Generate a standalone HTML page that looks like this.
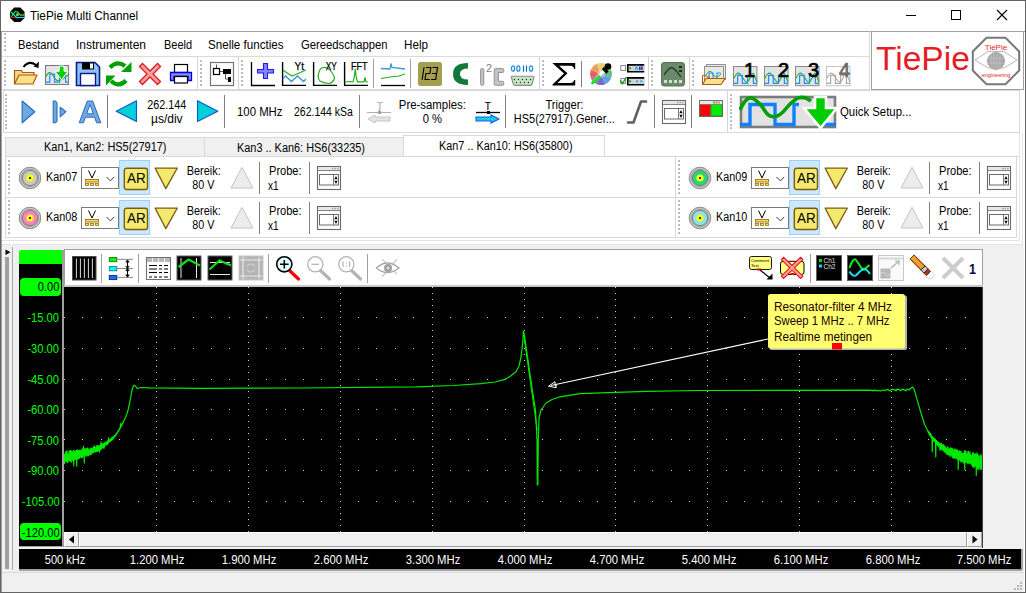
<!DOCTYPE html>
<html><head><meta charset="utf-8"><style>
html,body{margin:0;padding:0;width:1026px;height:593px;overflow:hidden;background:#fff}
body{position:relative;font-family:"Liberation Sans",sans-serif}
body>div,body>svg{position:absolute}
.t{white-space:nowrap;line-height:1;}
</style></head><body>
<div style="left:0px;top:0px;width:1026px;height:593px;background:#fff;border:1px solid #646464;box-sizing:border-box"></div>
<svg style="left:10px;top:7px;" width="15" height="16" viewBox="0 0 15 16"><polygon points="4.2,0.6 10.4,0.6 14.5,4.7 14.5,10.9 10.4,15 4.2,15 0.1,10.9 0.1,4.7" fill="#000"/><path d="M0.3,10.4 L6,10.4" stroke="#f00" stroke-width="1.1"/><path d="M10,7.2 L14.2,7.2" stroke="#f00" stroke-width="1"/><path d="M1.4,9.7 L5.2,4.4 L7.7,4.9 L10.2,8.2 L14.2,8.1" stroke="#0f0" stroke-width="1.1" fill="none"/><path d="M0.9,4.9 L6.7,10.7 L14.2,10.3" stroke="#0ff" stroke-width="1.1" fill="none"/><circle cx="7.4" cy="7.7" r="1.6" fill="#a0a0a0"/></svg>
<div style="left:906px;top:15px;width:10px;height:1px;background:#000"></div>
<div style="left:951px;top:10px;width:10px;height:10px;border:1px solid #000;box-sizing:border-box"></div>
<svg style="left:996px;top:9px;" width="12" height="12" viewBox="0 0 12 12"><path d="M1 1L11 11M11 1L1 11" stroke="#000" stroke-width="1.1"/></svg>
<div style="left:1px;top:31px;width:1024px;height:1px;background:#a0a0a0"></div>
<div style="left:1px;top:32px;width:1px;height:560px;background:#a0a0a0"></div>
<div style="left:2px;top:56px;width:867px;height:1px;background:#dadada"></div>
<div style="left:4px;top:33px;width:2px;height:2px;background:#c4c4c4"></div>
<div style="left:5px;top:34px;width:1px;height:1px;background:#a8a8a8"></div>
<div style="left:4px;top:37px;width:2px;height:2px;background:#c4c4c4"></div>
<div style="left:5px;top:38px;width:1px;height:1px;background:#a8a8a8"></div>
<div style="left:4px;top:41px;width:2px;height:2px;background:#c4c4c4"></div>
<div style="left:5px;top:42px;width:1px;height:1px;background:#a8a8a8"></div>
<div style="left:4px;top:45px;width:2px;height:2px;background:#c4c4c4"></div>
<div style="left:5px;top:46px;width:1px;height:1px;background:#a8a8a8"></div>
<div style="left:4px;top:49px;width:2px;height:2px;background:#c4c4c4"></div>
<div style="left:5px;top:50px;width:1px;height:1px;background:#a8a8a8"></div>
<div style="left:2px;top:89px;width:867px;height:1px;background:#dadada"></div>
<div style="left:869px;top:31px;width:1px;height:59px;background:#dadada"></div>
<div style="left:4px;top:60px;width:2px;height:2px;background:#c4c4c4"></div>
<div style="left:5px;top:61px;width:1px;height:1px;background:#a8a8a8"></div>
<div style="left:4px;top:64px;width:2px;height:2px;background:#c4c4c4"></div>
<div style="left:5px;top:65px;width:1px;height:1px;background:#a8a8a8"></div>
<div style="left:4px;top:68px;width:2px;height:2px;background:#c4c4c4"></div>
<div style="left:5px;top:69px;width:1px;height:1px;background:#a8a8a8"></div>
<div style="left:4px;top:72px;width:2px;height:2px;background:#c4c4c4"></div>
<div style="left:5px;top:73px;width:1px;height:1px;background:#a8a8a8"></div>
<div style="left:4px;top:76px;width:2px;height:2px;background:#c4c4c4"></div>
<div style="left:5px;top:77px;width:1px;height:1px;background:#a8a8a8"></div>
<div style="left:4px;top:80px;width:2px;height:2px;background:#c4c4c4"></div>
<div style="left:5px;top:81px;width:1px;height:1px;background:#a8a8a8"></div>
<div style="left:4px;top:84px;width:2px;height:2px;background:#c4c4c4"></div>
<div style="left:5px;top:85px;width:1px;height:1px;background:#a8a8a8"></div>
<div style="left:197px;top:57px;width:1px;height:32px;background:#d4d4d4"></div>
<div style="left:200px;top:60px;width:2px;height:2px;background:#c4c4c4"></div>
<div style="left:201px;top:61px;width:1px;height:1px;background:#a8a8a8"></div>
<div style="left:200px;top:64px;width:2px;height:2px;background:#c4c4c4"></div>
<div style="left:201px;top:65px;width:1px;height:1px;background:#a8a8a8"></div>
<div style="left:200px;top:68px;width:2px;height:2px;background:#c4c4c4"></div>
<div style="left:201px;top:69px;width:1px;height:1px;background:#a8a8a8"></div>
<div style="left:200px;top:72px;width:2px;height:2px;background:#c4c4c4"></div>
<div style="left:201px;top:73px;width:1px;height:1px;background:#a8a8a8"></div>
<div style="left:200px;top:76px;width:2px;height:2px;background:#c4c4c4"></div>
<div style="left:201px;top:77px;width:1px;height:1px;background:#a8a8a8"></div>
<div style="left:200px;top:80px;width:2px;height:2px;background:#c4c4c4"></div>
<div style="left:201px;top:81px;width:1px;height:1px;background:#a8a8a8"></div>
<div style="left:200px;top:84px;width:2px;height:2px;background:#c4c4c4"></div>
<div style="left:201px;top:85px;width:1px;height:1px;background:#a8a8a8"></div>
<div style="left:238px;top:57px;width:1px;height:32px;background:#d4d4d4"></div>
<div style="left:241px;top:60px;width:2px;height:2px;background:#c4c4c4"></div>
<div style="left:242px;top:61px;width:1px;height:1px;background:#a8a8a8"></div>
<div style="left:241px;top:64px;width:2px;height:2px;background:#c4c4c4"></div>
<div style="left:242px;top:65px;width:1px;height:1px;background:#a8a8a8"></div>
<div style="left:241px;top:68px;width:2px;height:2px;background:#c4c4c4"></div>
<div style="left:242px;top:69px;width:1px;height:1px;background:#a8a8a8"></div>
<div style="left:241px;top:72px;width:2px;height:2px;background:#c4c4c4"></div>
<div style="left:242px;top:73px;width:1px;height:1px;background:#a8a8a8"></div>
<div style="left:241px;top:76px;width:2px;height:2px;background:#c4c4c4"></div>
<div style="left:242px;top:77px;width:1px;height:1px;background:#a8a8a8"></div>
<div style="left:241px;top:80px;width:2px;height:2px;background:#c4c4c4"></div>
<div style="left:242px;top:81px;width:1px;height:1px;background:#a8a8a8"></div>
<div style="left:241px;top:84px;width:2px;height:2px;background:#c4c4c4"></div>
<div style="left:242px;top:85px;width:1px;height:1px;background:#a8a8a8"></div>
<div style="left:539px;top:57px;width:1px;height:32px;background:#d4d4d4"></div>
<div style="left:542px;top:60px;width:2px;height:2px;background:#c4c4c4"></div>
<div style="left:543px;top:61px;width:1px;height:1px;background:#a8a8a8"></div>
<div style="left:542px;top:64px;width:2px;height:2px;background:#c4c4c4"></div>
<div style="left:543px;top:65px;width:1px;height:1px;background:#a8a8a8"></div>
<div style="left:542px;top:68px;width:2px;height:2px;background:#c4c4c4"></div>
<div style="left:543px;top:69px;width:1px;height:1px;background:#a8a8a8"></div>
<div style="left:542px;top:72px;width:2px;height:2px;background:#c4c4c4"></div>
<div style="left:543px;top:73px;width:1px;height:1px;background:#a8a8a8"></div>
<div style="left:542px;top:76px;width:2px;height:2px;background:#c4c4c4"></div>
<div style="left:543px;top:77px;width:1px;height:1px;background:#a8a8a8"></div>
<div style="left:542px;top:80px;width:2px;height:2px;background:#c4c4c4"></div>
<div style="left:543px;top:81px;width:1px;height:1px;background:#a8a8a8"></div>
<div style="left:542px;top:84px;width:2px;height:2px;background:#c4c4c4"></div>
<div style="left:543px;top:85px;width:1px;height:1px;background:#a8a8a8"></div>
<div style="left:648px;top:57px;width:1px;height:32px;background:#d4d4d4"></div>
<div style="left:651px;top:60px;width:2px;height:2px;background:#c4c4c4"></div>
<div style="left:652px;top:61px;width:1px;height:1px;background:#a8a8a8"></div>
<div style="left:651px;top:64px;width:2px;height:2px;background:#c4c4c4"></div>
<div style="left:652px;top:65px;width:1px;height:1px;background:#a8a8a8"></div>
<div style="left:651px;top:68px;width:2px;height:2px;background:#c4c4c4"></div>
<div style="left:652px;top:69px;width:1px;height:1px;background:#a8a8a8"></div>
<div style="left:651px;top:72px;width:2px;height:2px;background:#c4c4c4"></div>
<div style="left:652px;top:73px;width:1px;height:1px;background:#a8a8a8"></div>
<div style="left:651px;top:76px;width:2px;height:2px;background:#c4c4c4"></div>
<div style="left:652px;top:77px;width:1px;height:1px;background:#a8a8a8"></div>
<div style="left:651px;top:80px;width:2px;height:2px;background:#c4c4c4"></div>
<div style="left:652px;top:81px;width:1px;height:1px;background:#a8a8a8"></div>
<div style="left:651px;top:84px;width:2px;height:2px;background:#c4c4c4"></div>
<div style="left:652px;top:85px;width:1px;height:1px;background:#a8a8a8"></div>
<div style="left:689px;top:57px;width:1px;height:32px;background:#d4d4d4"></div>
<div style="left:692px;top:60px;width:2px;height:2px;background:#c4c4c4"></div>
<div style="left:693px;top:61px;width:1px;height:1px;background:#a8a8a8"></div>
<div style="left:692px;top:64px;width:2px;height:2px;background:#c4c4c4"></div>
<div style="left:693px;top:65px;width:1px;height:1px;background:#a8a8a8"></div>
<div style="left:692px;top:68px;width:2px;height:2px;background:#c4c4c4"></div>
<div style="left:693px;top:69px;width:1px;height:1px;background:#a8a8a8"></div>
<div style="left:692px;top:72px;width:2px;height:2px;background:#c4c4c4"></div>
<div style="left:693px;top:73px;width:1px;height:1px;background:#a8a8a8"></div>
<div style="left:692px;top:76px;width:2px;height:2px;background:#c4c4c4"></div>
<div style="left:693px;top:77px;width:1px;height:1px;background:#a8a8a8"></div>
<div style="left:692px;top:80px;width:2px;height:2px;background:#c4c4c4"></div>
<div style="left:693px;top:81px;width:1px;height:1px;background:#a8a8a8"></div>
<div style="left:692px;top:84px;width:2px;height:2px;background:#c4c4c4"></div>
<div style="left:693px;top:85px;width:1px;height:1px;background:#a8a8a8"></div>
<div style="left:373px;top:59px;width:1px;height:29px;background:#a0a0a0"></div>
<div style="left:410px;top:59px;width:1px;height:29px;background:#a0a0a0"></div>
<div style="left:581px;top:61px;width:1px;height:26px;background:#808080"></div>
<svg style="left:12px;top:60px;" width="28" height="26" viewBox="0 0 28 26"><path d="M11.5,7 Q17,0 24,5" stroke="#000" stroke-width="2" fill="none"/><path d="M21.5,6.5 L27,1.5 L26.5,8 Z" fill="#000"/><path d="M2.5,24 L2.5,10.5 L9.5,10.5 L10.5,12.5 L22,12.5 L22,15" fill="#f5d890" stroke="#b05a0a" stroke-width="1.2"/><path d="M2.5,24 L7,15 L25,15 L21,24 Z" fill="#fbe08c" stroke="#b05a0a" stroke-width="1.2" stroke-linejoin="round"/></svg>
<svg style="left:44px;top:64px;" width="26" height="22" viewBox="0 0 26 22"><rect x="1.5" y="1.5" width="23" height="19" fill="#e6e6e6" stroke="#7c7c7c" stroke-width="1.1"/><path d="M2,12.5 Q5,6 8,10 Q11,15 13,16.5 Q17,17 21,13 L24,11" stroke="#20b020" stroke-width="1.1" fill="none"/><path d="M2,18.2 L5.8,18.2 L5.8,10.2 L10.5,10.2 L10.5,18.2 L15.7,18.2 L15.7,10.2 L21.6,10.2 L21.6,18.2 L24,18.2" stroke="#1e8cff" stroke-width="1.2" fill="none"/><path d="M15.2,2.1 L20,2.1 L20,7.3 L24,7.3 L17.6,15.8 L11,7.3 L15.2,7.3 Z" fill="#00d000" stroke="#fff" stroke-width="1"/></svg>
<svg style="left:75px;top:61px;" width="26" height="26" viewBox="0 0 26 26"><path d="M1.5,1.5 L20,1.5 L24.5,6 L24.5,24.5 L1.5,24.5 Z" fill="#8cc4f8" stroke="#0a1a8c" stroke-width="1.6"/><rect x="7" y="1.5" width="12" height="7" fill="#000"/><rect x="15" y="2.5" width="3" height="5" fill="#fff"/><rect x="5.5" y="12.5" width="15" height="12" fill="#fff" stroke="#0a1a8c" stroke-width="1.4"/></svg>
<svg style="left:105px;top:61px;" width="28" height="26" viewBox="0 0 28 26"><path d="M5,6.5 Q12,-1 20,5" stroke="#00a000" stroke-width="4.2" fill="none"/><path d="M16,11 L26.5,11 L26.5,1 Z" fill="#00a000"/><path d="M21,19.5 Q14,27 6,20" stroke="#00a000" stroke-width="4.2" fill="none"/><path d="M10.5,14.5 L1,14.5 L1,24.5 Z" fill="#00a000"/></svg>
<svg style="left:138px;top:62px;" width="24" height="24" viewBox="0 0 24 24"><path d="M1.5,4.5 L4.5,1.5 L12,9 L19.5,1.5 L22.5,4.5 L15,12 L22.5,19.5 L19.5,22.5 L12,15 L4.5,22.5 L1.5,19.5 L9,12 Z" fill="#f4a0a0" stroke="#dc1e1e" stroke-width="1.3" stroke-linejoin="miter"/></svg>
<svg style="left:169px;top:63px;" width="24" height="22" viewBox="0 0 24 22"><rect x="5.5" y="1.5" width="13" height="8" fill="#fff" stroke="#000" stroke-width="1.2"/><path d="M1.5,9.5 L22.5,9.5 L22.5,17.5 L19,17.5 L19,13.5 L5,13.5 L5,17.5 L1.5,17.5 Z" fill="#8888f4" stroke="#0000e0" stroke-width="1.3"/><rect x="5.5" y="13.5" width="13" height="6.5" fill="#fff" stroke="#000" stroke-width="1.2"/></svg>
<svg style="left:209px;top:61px;" width="26" height="26" viewBox="0 0 26 26"><rect x="1.5" y="1.5" width="23" height="23" fill="#fff" stroke="#767676" stroke-width="1.2"/><path d="M7.5,3.5 L7.5,7.5 M11,10.5 L14,10.5 M16.5,12.5 L16.5,18 L19,18" stroke="#555" stroke-width="1" fill="none"/><rect x="4.5" y="7.5" width="6" height="6" fill="#fff" stroke="#000" stroke-width="1.2"/><rect x="14" y="8" width="8" height="5" fill="#000"/><rect x="19" y="16" width="3" height="5" fill="#000"/></svg>
<svg style="left:250px;top:61px;" width="26" height="26" viewBox="0 0 26 26"><path d="M1.5,1 L1.5,24.5 L25,24.5" stroke="#000" stroke-width="1.3" fill="none"/><path d="M13.5,2.5 L17.5,2.5 L17.5,8.5 L23.5,8.5 L23.5,12 L17.5,12 L17.5,17.5 L13.5,17.5 L13.5,12 L7.5,12 L7.5,8.5 L13.5,8.5 Z" fill="#8484ff" stroke="#1e1ee6" stroke-width="1.1"/></svg>
<svg style="left:281px;top:61px;" width="26" height="26" viewBox="0 0 26 26"><path d="M1.6,1 L1.6,24.4 L25,24.4" stroke="#000" stroke-width="1.4" fill="none"/><path d="M2,9.3 L11,15 L17,12.5 L25,9" stroke="#20b020" stroke-width="1.2" fill="none"/><path d="M2,17.5 L4.5,15 L10.5,20.5 L16.5,15 L22.5,20.5 L25,18" stroke="#3c96dc" stroke-width="1.4" fill="none"/><text x="13.5" y="8.6" font-size="10.5" font-family="Liberation Sans" fill="#000" stroke="#000" stroke-width="0.25" textLength="9.5" lengthAdjust="spacingAndGlyphs">Yt</text></svg>
<svg style="left:312px;top:61px;" width="26" height="26" viewBox="0 0 26 26"><path d="M1.6,1 L1.6,24.4 L25,24.4" stroke="#000" stroke-width="1.4" fill="none"/><path d="M10,6.8 Q15,5.5 18,9 Q22,14 22.5,17 Q21.5,21 17.5,22.5 Q12,22.5 8,20 Q5.5,17.5 6.5,13 Q7.5,8 10,6.8 Z" stroke="#20b020" stroke-width="1.2" fill="none"/><text x="13.8" y="8.6" font-size="10.5" font-family="Liberation Sans" fill="#000" stroke="#000" stroke-width="0.25" textLength="11" lengthAdjust="spacingAndGlyphs">XY</text></svg>
<svg style="left:343px;top:61px;" width="26" height="26" viewBox="0 0 26 26"><path d="M1.6,1 L1.6,24.4 L25,24.4" stroke="#000" stroke-width="1.4" fill="none"/><path d="M2,21 L7,20.5 L10,20.8 L11.3,16 L12.3,7.8 L13.3,17 L14.5,20.8 L21,20.8 L22,16.5 L23,20.8 L25,21" stroke="#20b020" stroke-width="1.2" fill="none"/><text x="8" y="8.6" font-size="10.5" font-family="Liberation Sans" fill="#000" stroke="#000" stroke-width="0.25" textLength="16.5" lengthAdjust="spacingAndGlyphs">FFT</text></svg>
<svg style="left:380px;top:61px;" width="26" height="26" viewBox="0 0 26 26"><path d="M1,7.5 L10,8 L11,2.5 L12,6.5 L25,8" stroke="#3c96dc" stroke-width="1.3" fill="none"/><path d="M1,17.5 L10,16 L19,15 L25,13" stroke="#20b020" stroke-width="1.2" fill="none"/><path d="M1,24.5 L25,24.5" stroke="#000" stroke-width="1.3"/></svg>
<svg style="left:417px;top:61px;" width="26" height="26" viewBox="0 0 26 26"><rect x="1" y="1" width="24" height="24" rx="2.5" fill="#a59e4e"/><g stroke="#000" stroke-width="1.1" fill="none" stroke-linecap="round"><path d="M7,6.5 L5.2,18.5"/><path d="M9.5,6.5 L13.8,6.5 L12.9,12.5 L8.9,12.5 L8,18.5 L12.3,18.5"/><path d="M16,6.5 L20.5,6.5 L18.7,18.5 L14.5,18.5 M15.4,12.5 L19.6,12.5"/></g></svg>
<svg style="left:452px;top:61px;" width="18" height="26" viewBox="0 0 18 26"><path d="M16,2 L16,7.5 Q8,7.5 8,13 Q8,18.5 16,18.5 L16,24 Q1,24 1,13 Q1,2 16,2 Z" fill="#117a3a"/></svg>
<svg style="left:478px;top:62px;" width="28" height="26" viewBox="0 0 28 26"><rect x="2.6" y="6.5" width="3.2" height="16.8" rx="1.6" fill="#c4c4c4" stroke="#8a8a8a" stroke-width="0.9"/><text x="8" y="10" font-size="10" font-family="Liberation Sans" fill="#808080" textLength="6" lengthAdjust="spacingAndGlyphs">2</text><path d="M17.5,6.5 L24.5,6.5 Q25.8,6.5 25.8,8 L25.8,9.5 Q25.8,10.5 24.5,10.5 L20.4,10.5 L20.4,19.3 L24.5,19.3 Q25.8,19.3 25.8,20.5 L25.8,22 Q25.8,23.3 24.5,23.3 L17.5,23.3 Q16.2,23.3 16.2,22 L16.2,8 Q16.2,6.5 17.5,6.5 Z" fill="#c4c4c4" stroke="#8a8a8a" stroke-width="0.9"/></svg>
<svg style="left:509px;top:62px;" width="26" height="26" viewBox="0 0 26 26"><g fill="none" stroke="#2490e0" stroke-width="1.3"><ellipse cx="4" cy="6.5" rx="1.6" ry="2.7"/><ellipse cx="9.3" cy="6.5" rx="1.6" ry="2.7"/><ellipse cx="22" cy="6.5" rx="1.6" ry="2.7"/></g><path d="M14.5,3.5 V9.8 M17.5,3.5 V9.8" stroke="#1070c8" stroke-width="1.2"/><path d="M3.2,14.3 L24,14.3 Q25.2,14.3 24.9,15.5 L23,22.2 Q22.7,23.4 21.5,23.4 L5.8,23.4 Q4.6,23.4 4.3,22.2 L2.4,15.5 Q2.1,14.3 3.2,14.3 Z" fill="#c4e4c4" stroke="#8c8c8c" stroke-width="1.1"/><g fill="#222"><circle cx="5.4" cy="17.5" r="0.65"/><circle cx="9.4" cy="17.5" r="0.65"/><circle cx="13.4" cy="17.5" r="0.65"/><circle cx="17.4" cy="17.5" r="0.65"/><circle cx="21.4" cy="17.5" r="0.65"/><circle cx="7.4" cy="20.5" r="0.65"/><circle cx="11.4" cy="20.5" r="0.65"/><circle cx="15.4" cy="20.5" r="0.65"/><circle cx="19.4" cy="20.5" r="0.65"/></g></svg>
<svg style="left:551px;top:62px;" width="26" height="26" viewBox="0 0 26 26"><path d="M1.3,1 L24.2,1 L24.2,7 L23.2,7 Q22.5,3.7 19,3.7 L8,3.7 L16.5,11.3 L6.5,20.9 L19.5,20.9 Q22.5,20.9 23.2,17.9 L24.2,17.9 L24.2,23.5 L1.5,23.5 L1.5,22.6 L13,11.6 Z" fill="#000"/></svg>
<svg style="left:589px;top:62px;" width="24" height="24" viewBox="0 0 24 24"><path d="M12,12 L22.16,7.79 A11,11 0 0 1 22.16,16.21 Z" fill="#5cc080"/><path d="M12,12 L22.16,16.21 A11,11 0 0 1 16.21,22.16 Z" fill="#60a0e0"/><path d="M12,12 L16.21,22.16 A11,11 0 0 1 7.79,22.16 Z" fill="#7070c8"/><path d="M12,12 L7.79,22.16 A11,11 0 0 1 1.84,16.21 Z" fill="#b060b8"/><path d="M12,12 L1.84,16.21 A11,11 0 0 1 1.84,7.79 Z" fill="#e86060"/><path d="M12,12 L1.84,7.79 A11,11 0 0 1 7.79,1.84 Z" fill="#e8a060"/><path d="M12,12 L7.79,1.84 A11,11 0 0 1 16.21,1.84 Z" fill="#e8d070"/><path d="M12,12 L16.21,1.84 A11,11 0 0 1 22.16,7.79 Z" fill="#a8d070"/><circle cx="12" cy="12" r="4" fill="#ffffff" opacity="0.3"/><path d="M5,19 L16,8" stroke="#fff" stroke-width="2.6"/><path d="M3.5,21 L10,14.5" stroke="#10ee10" stroke-width="2.8" stroke-linecap="round"/><path d="M14,6 L18.5,10.5" stroke="#000" stroke-width="3.2"/><circle cx="19" cy="4.5" r="3.3" fill="#000"/></svg>
<svg style="left:619px;top:62px;" width="27" height="24" viewBox="0 0 27 24"><rect x="1.8" y="3.5" width="4.8" height="5" fill="#fff" stroke="#8a8a8a" stroke-width="1"/><rect x="8.8" y="2.9" width="17" height="6.8" fill="#d4d4d4"/><path d="M25.2,2.9 L8.8,2.9 L8.8,9.7 L25.2,9.7" stroke="#000" stroke-width="1.6" fill="none"/><path d="M10.3,4.8 L12.6,6.3 L10.3,7.8 Z" fill="#10a010"/><path d="M16,8 L17.5,4.5 L19,8" stroke="#30b0e8" stroke-width="1.3" fill="none"/><rect x="20.2" y="4.5" width="1.3" height="3.6" fill="#0010c0"/><rect x="22.3" y="4.5" width="1.3" height="3.6" fill="#0010c0"/><rect x="1.8" y="16.5" width="4.8" height="5" fill="#fff" stroke="#8a8a8a" stroke-width="1"/><path d="M1.2,18.5 L3.5,21.5 L7.5,15" stroke="#10a010" stroke-width="1.4" fill="none"/><rect x="8.8" y="15.9" width="17" height="6.8" fill="#d4d4d4"/><path d="M25.2,15.9 L8.8,15.9 L8.8,22.7 L25.2,22.7" stroke="#000" stroke-width="1.6" fill="none"/><path d="M10.3,17.8 L12.6,19.3 L10.3,20.8 Z" fill="#10a010"/><path d="M19,17.6 L16.5,19.3 L19,21 Z" fill="#30b0e8"/><path d="M21.5,17.6 L24,19.3 L21.5,21 Z" fill="#30b0e8"/></svg>
<svg style="left:660px;top:61px;" width="26" height="26" viewBox="0 0 26 26"><rect x="1.5" y="1.5" width="23" height="23.5" rx="2.5" fill="#6b8a6b" stroke="#567556" stroke-width="1"/><path d="M4,14 Q10,5 13,7 Q17,10 21,16" stroke="#1e2a1e" stroke-width="1.2" fill="none"/><rect x="19" y="5" width="3" height="2" fill="#1e2a1e"/><rect x="19" y="9" width="3" height="2" fill="#1e2a1e"/><g fill="#cfe0cf"><rect x="4" y="19" width="3" height="3"/><rect x="9" y="19" width="3" height="3"/><rect x="14" y="19" width="3" height="3"/><rect x="19" y="19" width="3" height="3"/></g></svg>
<svg style="left:701px;top:63px;" width="26" height="24" viewBox="0 0 26 24"><rect x="5.5" y="1.5" width="19" height="15" fill="#e8e8e8" stroke="#909090" stroke-width="1"/><rect x="3.5" y="3.5" width="19" height="15" fill="#e8e8e8" stroke="#909090" stroke-width="1"/><path d="M5,12 Q9,5 12,11 T20,11" stroke="#20b020" stroke-width="1" fill="none"/><path d="M8,17 L8,10 L12,10 L12,17 L16,17 L16,10 L20,10" stroke="#1e90ff" stroke-width="1.1" fill="none"/><path d="M1.5,21.5 L1.5,12.5 L5,12.5 L6,14 L9,14" fill="none" stroke="#b05a0a" stroke-width="1"/><path d="M1.5,21.5 L5,15.5 L24,15.5 L20,21.5 Z" fill="#fbe08c" stroke="#b05a0a" stroke-width="1.1" stroke-linejoin="round"/></svg>
<svg style="left:733px;top:61px;" width="26" height="26" viewBox="0 0 26 26"><rect x="0.5" y="5.5" width="23.5" height="19.2" fill="#e4e4e4" stroke="#8a8a8a" stroke-width="1"/><path d="M1,17.3 Q4,10 7,13 Q10,17 12,20 Q14.5,23 17,17 Q19.5,10 21,13.5 Q22.5,17 24,21" stroke="#20b020" stroke-width="1.1" fill="none"/><path d="M1,22.3 L4.6,22.3 L4.6,14.3 L9.3,14.3 L9.3,22.3 L14.5,22.3 L14.5,14.3 L20.4,14.3 L20.4,22.3 L24,22.3" stroke="#1e90ff" stroke-width="1.2" fill="none"/></svg>
<svg style="left:738px;top:58px" width="18" height="20" viewBox="0 0 18 20"><text x="17" y="18.7" text-anchor="end" font-size="20" font-family="Liberation Sans" fill="#000" stroke="#000" stroke-width="0.7">1</text></svg>
<svg style="left:764px;top:61px;" width="26" height="26" viewBox="0 0 26 26"><rect x="0.5" y="5.5" width="23.5" height="19.2" fill="#e4e4e4" stroke="#8a8a8a" stroke-width="1"/><path d="M1,17.3 Q4,10 7,13 Q10,17 12,20 Q14.5,23 17,17 Q19.5,10 21,13.5 Q22.5,17 24,21" stroke="#20b020" stroke-width="1.1" fill="none"/><path d="M1,22.3 L4.6,22.3 L4.6,14.3 L9.3,14.3 L9.3,22.3 L14.5,22.3 L14.5,14.3 L20.4,14.3 L20.4,22.3 L24,22.3" stroke="#1e90ff" stroke-width="1.2" fill="none"/></svg>
<svg style="left:771.5px;top:58px" width="18" height="20" viewBox="0 0 18 20"><text x="17" y="18.7" text-anchor="end" font-size="20" font-family="Liberation Sans" fill="#000" stroke="#000" stroke-width="0.7">2</text></svg>
<svg style="left:795px;top:61px;" width="26" height="26" viewBox="0 0 26 26"><rect x="0.5" y="5.5" width="23.5" height="19.2" fill="#e4e4e4" stroke="#8a8a8a" stroke-width="1"/><path d="M1,17.3 Q4,10 7,13 Q10,17 12,20 Q14.5,23 17,17 Q19.5,10 21,13.5 Q22.5,17 24,21" stroke="#20b020" stroke-width="1.1" fill="none"/><path d="M1,22.3 L4.6,22.3 L4.6,14.3 L9.3,14.3 L9.3,22.3 L14.5,22.3 L14.5,14.3 L20.4,14.3 L20.4,22.3 L24,22.3" stroke="#1e90ff" stroke-width="1.2" fill="none"/></svg>
<svg style="left:801.8px;top:58px" width="18" height="20" viewBox="0 0 18 20"><text x="17" y="18.7" text-anchor="end" font-size="20" font-family="Liberation Sans" fill="#000" stroke="#000" stroke-width="0.7">3</text></svg>
<svg style="left:826px;top:61px;" width="26" height="26" viewBox="0 0 26 26"><rect x="0.5" y="5.5" width="23.5" height="19.2" fill="#ffffff" stroke="#c4c4c4" stroke-width="1"/><path d="M1,17.3 Q4,10 7,13 Q10,17 12,20 Q14.5,23 17,17 Q19.5,10 21,13.5 Q22.5,17 24,21" stroke="#a8a8a8" stroke-width="1.1" fill="none"/><path d="M1,22.3 L4.6,22.3 L4.6,14.3 L9.3,14.3 L9.3,22.3 L14.5,22.3 L14.5,14.3 L20.4,14.3 L20.4,22.3 L24,22.3" stroke="#a8a8a8" stroke-width="1.2" fill="none"/></svg>
<svg style="left:832.8px;top:58px" width="18" height="20" viewBox="0 0 18 20"><text x="17" y="18.7" text-anchor="end" font-size="20" font-family="Liberation Sans" fill="#6a6a6a" stroke="#6a6a6a" stroke-width="0.7">4</text></svg>
<div style="left:871px;top:31px;width:153px;height:59px;background:#fff;border:1px solid #a0a0a0;box-sizing:border-box"></div>
<svg style="left:971px;top:36px;" width="50" height="50" viewBox="0 0 50 50"><polygon points="15.5,1.8 34.5,1.8 48.2,15.5 48.2,34.5 34.5,48.2 15.5,48.2 1.8,34.5 1.8,15.5" fill="#fff" stroke="#777" stroke-width="2"/><path d="M4,24 L17,15.5 L33,15.5 L46,24 L33,32 L17,32 Z" fill="none" stroke="#888" stroke-width="0.6"/><circle cx="25" cy="25" r="8.5" fill="#a8a8a8" stroke="#888" stroke-width="0.6"/><g stroke="#d0d0d0" stroke-width="0.5"><path d="M20,18 L20,32 M23,17 L23,33 M26,17 L26,33 M29,17 L29,33M17,22 L33,22 M17,27 L33,27"/></g><text x="25" y="14" font-size="8" font-family="Liberation Sans" fill="#e31e24" text-anchor="middle">TiePie</text><text x="25" y="41" font-size="5.5" font-family="Liberation Sans" fill="#e31e24" text-anchor="middle">engineering</text></svg>
<div style="left:3px;top:90px;width:1017px;height:43px;background:#fff;border:1px solid #dadada;box-sizing:border-box"></div>
<div style="left:5px;top:94px;width:2px;height:2px;background:#c4c4c4"></div>
<div style="left:6px;top:95px;width:1px;height:1px;background:#a8a8a8"></div>
<div style="left:5px;top:98px;width:2px;height:2px;background:#c4c4c4"></div>
<div style="left:6px;top:99px;width:1px;height:1px;background:#a8a8a8"></div>
<div style="left:5px;top:101px;width:2px;height:2px;background:#c4c4c4"></div>
<div style="left:6px;top:102px;width:1px;height:1px;background:#a8a8a8"></div>
<div style="left:5px;top:105px;width:2px;height:2px;background:#c4c4c4"></div>
<div style="left:6px;top:106px;width:1px;height:1px;background:#a8a8a8"></div>
<div style="left:5px;top:109px;width:2px;height:2px;background:#c4c4c4"></div>
<div style="left:6px;top:110px;width:1px;height:1px;background:#a8a8a8"></div>
<div style="left:5px;top:112px;width:2px;height:2px;background:#c4c4c4"></div>
<div style="left:6px;top:113px;width:1px;height:1px;background:#a8a8a8"></div>
<div style="left:5px;top:116px;width:2px;height:2px;background:#c4c4c4"></div>
<div style="left:6px;top:117px;width:1px;height:1px;background:#a8a8a8"></div>
<div style="left:5px;top:120px;width:2px;height:2px;background:#c4c4c4"></div>
<div style="left:6px;top:121px;width:1px;height:1px;background:#a8a8a8"></div>
<div style="left:5px;top:124px;width:2px;height:2px;background:#c4c4c4"></div>
<div style="left:6px;top:125px;width:1px;height:1px;background:#a8a8a8"></div>
<div style="left:5px;top:127px;width:2px;height:2px;background:#c4c4c4"></div>
<div style="left:6px;top:128px;width:1px;height:1px;background:#a8a8a8"></div>
<div style="left:107px;top:95px;width:1px;height:33px;background:#808080"></div>
<div style="left:224px;top:95px;width:1px;height:33px;background:#808080"></div>
<div style="left:359px;top:95px;width:1px;height:33px;background:#808080"></div>
<div style="left:505px;top:95px;width:1px;height:33px;background:#808080"></div>
<div style="left:654px;top:95px;width:1px;height:33px;background:#808080"></div>
<div style="left:691px;top:95px;width:1px;height:33px;background:#808080"></div>
<div style="left:727px;top:91px;width:1px;height:41px;background:#d4d4d4"></div>
<div style="left:730px;top:94px;width:2px;height:2px;background:#c4c4c4"></div>
<div style="left:731px;top:95px;width:1px;height:1px;background:#a8a8a8"></div>
<div style="left:730px;top:98px;width:2px;height:2px;background:#c4c4c4"></div>
<div style="left:731px;top:99px;width:1px;height:1px;background:#a8a8a8"></div>
<div style="left:730px;top:101px;width:2px;height:2px;background:#c4c4c4"></div>
<div style="left:731px;top:102px;width:1px;height:1px;background:#a8a8a8"></div>
<div style="left:730px;top:105px;width:2px;height:2px;background:#c4c4c4"></div>
<div style="left:731px;top:106px;width:1px;height:1px;background:#a8a8a8"></div>
<div style="left:730px;top:109px;width:2px;height:2px;background:#c4c4c4"></div>
<div style="left:731px;top:110px;width:1px;height:1px;background:#a8a8a8"></div>
<div style="left:730px;top:112px;width:2px;height:2px;background:#c4c4c4"></div>
<div style="left:731px;top:113px;width:1px;height:1px;background:#a8a8a8"></div>
<div style="left:730px;top:116px;width:2px;height:2px;background:#c4c4c4"></div>
<div style="left:731px;top:117px;width:1px;height:1px;background:#a8a8a8"></div>
<div style="left:730px;top:120px;width:2px;height:2px;background:#c4c4c4"></div>
<div style="left:731px;top:121px;width:1px;height:1px;background:#a8a8a8"></div>
<div style="left:730px;top:124px;width:2px;height:2px;background:#c4c4c4"></div>
<div style="left:731px;top:125px;width:1px;height:1px;background:#a8a8a8"></div>
<div style="left:730px;top:127px;width:2px;height:2px;background:#c4c4c4"></div>
<div style="left:731px;top:128px;width:1px;height:1px;background:#a8a8a8"></div>
<svg style="left:21px;top:100px;" width="16" height="24" viewBox="0 0 16 24"><path d="M1.2,1 L13.8,11.7 L1.2,22.8 Z" fill="#70a8e0" stroke="#2a6cc0" stroke-width="1.2" stroke-linejoin="round"/></svg>
<svg style="left:52px;top:100px;" width="16" height="24" viewBox="0 0 16 24"><path d="M1.2,1 L3.5,1 L5,3 L5,21 L3.5,22.8 L1.2,22.8 Z" fill="#70a8e0" stroke="#2a6cc0" stroke-width="1.1" stroke-linejoin="round"/><path d="M8.2,7.2 L14,11.7 L8.2,16.9 Z" fill="#70a8e0" stroke="#2a6cc0" stroke-width="1.1" stroke-linejoin="round"/></svg>
<svg style="left:78px;top:100px;" width="24" height="24" viewBox="0 0 24 24"><path d="M1.2,22.8 L9.3,1 L14.7,1 L22.8,22.8 L18.6,22.8 L16.6,17.2 L7.4,17.2 L5.4,22.8 Z M8.7,13.8 L15.3,13.8 L12,4.6 Z" fill="#70a8e0" stroke="#2a6cc0" stroke-width="1" fill-rule="evenodd" stroke-linejoin="round"/></svg>
<svg style="left:115px;top:100px;" width="23" height="23" viewBox="0 0 23 23"><path d="M21.5,0.8 L21.5,21.5 L1.2,11.2 Z" fill="#00d0d8" stroke="#1a50d0" stroke-width="1.1" stroke-linejoin="round"/></svg>
<svg style="left:196px;top:100px;" width="23" height="23" viewBox="0 0 23 23"><path d="M1.5,0.8 L1.5,21.5 L21.8,11.2 Z" fill="#00d0d8" stroke="#1a50d0" stroke-width="1.1" stroke-linejoin="round"/></svg>
<svg style="left:366px;top:100px;" width="26" height="24" viewBox="0 0 26 24"><text x="10.5" y="10" font-size="11" font-family="Liberation Sans" fill="#b0b0b0">T</text><path d="M1,12.5 L25,12.5 M13.5,9 L13.5,12.5" stroke="#b0b0b0" stroke-width="1.2"/><rect x="12" y="11" width="3" height="3" fill="#a0a0a0"/><path d="M24,17 L9,17 L9,15 L2,19 L9,23 L9,21 L24,21 Z" fill="#e4e4e4" stroke="#c4c4c4" stroke-width="1"/></svg>
<svg style="left:475px;top:100px;" width="26" height="24" viewBox="0 0 26 24"><text x="9.5" y="10" font-size="11" font-family="Liberation Sans" fill="#000">T</text><path d="M1,12.5 L25,12.5" stroke="#000" stroke-width="1.3"/><rect x="12" y="11" width="3" height="3" fill="#000"/><path d="M1,17 L16,17 L16,15 L24,19 L16,23 L16,21 L1,21 Z" fill="#20c8e8" stroke="#1060e0" stroke-width="1.1"/></svg>
<svg style="left:625px;top:99px;" width="24" height="26" viewBox="0 0 24 26"><path d="M3,23.5 L8.5,23.5 L16,2.5 L21,2.5" stroke="#606060" stroke-width="2.6" stroke-linecap="round" stroke-linejoin="round" fill="none"/></svg>
<svg style="left:661px;top:99px;" width="26" height="26" viewBox="0 0 26 26"><rect x="1.5" y="1.5" width="23" height="23" fill="#fff" stroke="#6a6a6a" stroke-width="1.1"/><rect x="2" y="2" width="22" height="3.5" fill="#e6e6e6"/><path d="M2,5.5 L24,5.5" stroke="#6a6a6a" stroke-width="0.8"/><g fill="#a0a0a0"><rect x="16" y="2.8" width="1.5" height="1.5"/><rect x="18.5" y="2.8" width="1.5" height="1.5"/></g><rect x="21" y="2.8" width="1.6" height="1.6" fill="#ff8080"/><rect x="3.5" y="9.5" width="19" height="10.5" fill="#fff" stroke="#6a6a6a" stroke-width="1"/><path d="M17.5,9.5 L17.5,20" stroke="#6a6a6a" stroke-width="0.9"/><path d="M18.5,14 L20,11 L21.5,14 Z M18.5,16 L20,19 L21.5,16 Z" fill="#000"/><path d="M17.5,15 L22.5,15" stroke="#6a6a6a" stroke-width="0.7"/></svg>
<svg style="left:698px;top:99px;" width="26" height="19" viewBox="0 0 26 19"><rect x="1.5" y="1.5" width="23" height="16" fill="#e0e0e0" stroke="#707070" stroke-width="1"/><rect x="2" y="2" width="22" height="3" fill="#e8e8e8"/><rect x="2" y="5.5" width="10.5" height="11.5" fill="#ff0000" stroke="#555" stroke-width="0.5"/><rect x="13" y="5.5" width="11" height="11.5" fill="#00ee00" stroke="#555" stroke-width="0.5"/><g fill="#ff8080"><rect x="20" y="2.5" width="2" height="2"/></g><g fill="#909090"><rect x="15" y="2.5" width="2" height="2"/><rect x="17.5" y="2.5" width="2" height="2"/></g></svg>
<svg style="left:739px;top:95px;" width="98" height="34" viewBox="0 0 98 34"><rect x="2" y="2" width="94" height="30" fill="#e2e2e2" stroke="#7c7c7c" stroke-width="2.6"/><path d="M1,29.5 L11,29.5 L11,9.5 L36,9.5 L36,29.5 L55,29.5 L55,9.5 L60,9.5 M78,29.5 L97,29.5" stroke="#1080ff" stroke-width="3.4" fill="none"/><path d="M1,15 Q8,-1 15,4 Q22,9 26,16 Q33,27 44,17 Q50,9 57,4 Q64,0 72,6" stroke="#00a000" stroke-width="3.6" fill="none"/><path d="M76,2 L87,2 L87,13 L98,13 L81.5,33 L65,13 L76,13 Z" fill="#00cc00" stroke="#fff" stroke-width="2.6" stroke-linejoin="miter"/></svg>
<div style="left:5px;top:137px;width:399px;height:20px;background:#f0f0f0;border:1px solid #d9d9d9;box-sizing:border-box"></div>
<div style="left:204px;top:137px;width:1px;height:19px;background:#d9d9d9"></div>
<div style="left:403px;top:135px;width:202px;height:22px;background:#fff;border:1px solid #d9d9d9;border-bottom:none;box-sizing:border-box"></div>
<div style="left:604px;top:156px;width:415px;height:1px;background:#d9d9d9"></div>
<div style="left:2px;top:157px;width:1021px;height:88px;background:#fff"></div>
<div style="left:2px;top:240px;width:1018px;height:1px;background:#e3e3e3"></div>
<div style="left:1019px;top:133px;width:1px;height:108px;background:#e3e3e3"></div>
<div style="left:2px;top:244px;width:1021px;height:1px;background:#e3e3e3"></div>
<div style="left:1022px;top:133px;width:1px;height:112px;background:#e3e3e3"></div>
<div style="left:5px;top:156px;width:1012px;height:82px;background:#fff;border:1px solid #d9d9d9;box-sizing:border-box"></div>
<div style="left:5px;top:197px;width:1012px;height:1px;background:#d9d9d9"></div>
<div style="left:675px;top:157px;width:1px;height:80px;background:#d9d9d9"></div>
<div style="left:8px;top:160px;width:2px;height:2px;background:#c4c4c4"></div>
<div style="left:9px;top:161px;width:1px;height:1px;background:#a8a8a8"></div>
<div style="left:8px;top:164px;width:2px;height:2px;background:#c4c4c4"></div>
<div style="left:9px;top:165px;width:1px;height:1px;background:#a8a8a8"></div>
<div style="left:8px;top:168px;width:2px;height:2px;background:#c4c4c4"></div>
<div style="left:9px;top:169px;width:1px;height:1px;background:#a8a8a8"></div>
<div style="left:8px;top:172px;width:2px;height:2px;background:#c4c4c4"></div>
<div style="left:9px;top:173px;width:1px;height:1px;background:#a8a8a8"></div>
<div style="left:8px;top:176px;width:2px;height:2px;background:#c4c4c4"></div>
<div style="left:9px;top:177px;width:1px;height:1px;background:#a8a8a8"></div>
<div style="left:8px;top:180px;width:2px;height:2px;background:#c4c4c4"></div>
<div style="left:9px;top:181px;width:1px;height:1px;background:#a8a8a8"></div>
<div style="left:8px;top:184px;width:2px;height:2px;background:#c4c4c4"></div>
<div style="left:9px;top:185px;width:1px;height:1px;background:#a8a8a8"></div>
<div style="left:8px;top:188px;width:2px;height:2px;background:#c4c4c4"></div>
<div style="left:9px;top:189px;width:1px;height:1px;background:#a8a8a8"></div>
<div style="left:8px;top:192px;width:2px;height:2px;background:#c4c4c4"></div>
<div style="left:9px;top:193px;width:1px;height:1px;background:#a8a8a8"></div>
<svg style="left:17.9px;top:165.7px;" width="24" height="24" viewBox="0 0 24 24"><circle cx="12" cy="12" r="10.8" fill="#c4c4c4" stroke="#8a8a8a" stroke-width="1"/><circle cx="12" cy="12" r="8.6" fill="none" stroke="#989898" stroke-width="0.9"/><circle cx="12" cy="12" r="7.6" fill="#c8c8c8" stroke="#6e6a4a" stroke-width="0.7"/><circle cx="12" cy="12" r="3.6" fill="#ffff00"/><circle cx="12" cy="12" r="1.1" fill="#000"/></svg>
<div style="left:81px;top:167px;width:38px;height:22px;background:#fff;border:1px solid #7a7a7a;box-sizing:border-box"></div>
<svg style="left:83px;top:168px;" width="34" height="20" viewBox="0 0 34 20"><path d="M5.5,2.5 L9,10 L12.5,2.5" stroke="#000" stroke-width="1" fill="none"/><rect x="2.5" y="11.5" width="13" height="2.5" fill="#f0e060" stroke="#a07010" stroke-width="0.9"/><g fill="#f0e060" stroke="#a07010" stroke-width="0.8"><rect x="2.5" y="15.5" width="3" height="2"/><rect x="7.5" y="15.5" width="3" height="2"/><rect x="12.5" y="15.5" width="3" height="2"/></g><path d="M23.5,9 L27.3,12.8 L31.2,9" stroke="#333" stroke-width="1" fill="none"/></svg>
<div style="left:119px;top:160px;width:31px;height:35px;background:#cce8ff;border:1px solid #99d1ff;box-sizing:border-box"></div>
<svg style="left:123px;top:167px;" width="26" height="24" viewBox="0 0 26 24"><rect x="1.3" y="1.3" width="23.2" height="21.2" rx="2.2" fill="#f2e96e" stroke="#7a5a10" stroke-width="1.4"/></svg>
<svg style="left:154px;top:167px;" width="25" height="23" viewBox="0 0 25 23"><path d="M1.2,1.2 L23.2,1.2 L11.8,21.6 Z" fill="#f2e96e" stroke="#7a5a10" stroke-width="1.3" stroke-linejoin="round"/></svg>
<svg style="left:230px;top:165.5px;" width="24" height="23" viewBox="0 0 24 23"><path d="M1,22.1 L22.9,22.1 L12,1.3 Z" fill="#ececec" stroke="#c4c4c4" stroke-width="1" stroke-linejoin="round"/></svg>
<div style="left:259px;top:162px;width:1px;height:32px;background:#808080"></div>
<div style="left:309px;top:162px;width:1px;height:32px;background:#808080"></div>
<svg style="left:316px;top:165px;" width="26" height="26" viewBox="0 0 26 26"><rect x="1.5" y="1.5" width="23" height="23" fill="#fff" stroke="#6a6a6a" stroke-width="1.1"/><rect x="2" y="2" width="22" height="3.5" fill="#e6e6e6"/><path d="M2,5.5 L24,5.5" stroke="#6a6a6a" stroke-width="0.8"/><g fill="#a0a0a0"><rect x="16" y="2.8" width="1.5" height="1.5"/><rect x="18.5" y="2.8" width="1.5" height="1.5"/></g><rect x="21" y="2.8" width="1.6" height="1.6" fill="#ff8080"/><rect x="3.5" y="9.5" width="19" height="10.5" fill="#fff" stroke="#6a6a6a" stroke-width="1"/><path d="M17.5,9.5 L17.5,20" stroke="#6a6a6a" stroke-width="0.9"/><path d="M18.5,14 L20,11 L21.5,14 Z M18.5,16 L20,19 L21.5,16 Z" fill="#000"/><path d="M17.5,15 L22.5,15" stroke="#6a6a6a" stroke-width="0.7"/></svg>
<div style="left:8px;top:200px;width:2px;height:2px;background:#c4c4c4"></div>
<div style="left:9px;top:201px;width:1px;height:1px;background:#a8a8a8"></div>
<div style="left:8px;top:204px;width:2px;height:2px;background:#c4c4c4"></div>
<div style="left:9px;top:205px;width:1px;height:1px;background:#a8a8a8"></div>
<div style="left:8px;top:208px;width:2px;height:2px;background:#c4c4c4"></div>
<div style="left:9px;top:209px;width:1px;height:1px;background:#a8a8a8"></div>
<div style="left:8px;top:212px;width:2px;height:2px;background:#c4c4c4"></div>
<div style="left:9px;top:213px;width:1px;height:1px;background:#a8a8a8"></div>
<div style="left:8px;top:216px;width:2px;height:2px;background:#c4c4c4"></div>
<div style="left:9px;top:217px;width:1px;height:1px;background:#a8a8a8"></div>
<div style="left:8px;top:220px;width:2px;height:2px;background:#c4c4c4"></div>
<div style="left:9px;top:221px;width:1px;height:1px;background:#a8a8a8"></div>
<div style="left:8px;top:224px;width:2px;height:2px;background:#c4c4c4"></div>
<div style="left:9px;top:225px;width:1px;height:1px;background:#a8a8a8"></div>
<div style="left:8px;top:228px;width:2px;height:2px;background:#c4c4c4"></div>
<div style="left:9px;top:229px;width:1px;height:1px;background:#a8a8a8"></div>
<div style="left:8px;top:232px;width:2px;height:2px;background:#c4c4c4"></div>
<div style="left:9px;top:233px;width:1px;height:1px;background:#a8a8a8"></div>
<svg style="left:17.9px;top:205.7px;" width="24" height="24" viewBox="0 0 24 24"><circle cx="12" cy="12" r="10.8" fill="#c4c4c4" stroke="#8a8a8a" stroke-width="1"/><circle cx="12" cy="12" r="8.6" fill="none" stroke="#989898" stroke-width="0.9"/><circle cx="12" cy="12" r="7.6" fill="#ff80c8" stroke="#6e6a4a" stroke-width="0.7"/><circle cx="12" cy="12" r="3.6" fill="#ffff00"/><circle cx="12" cy="12" r="1.1" fill="#000"/></svg>
<div style="left:81px;top:207px;width:38px;height:22px;background:#fff;border:1px solid #7a7a7a;box-sizing:border-box"></div>
<svg style="left:83px;top:208px;" width="34" height="20" viewBox="0 0 34 20"><path d="M5.5,2.5 L9,10 L12.5,2.5" stroke="#000" stroke-width="1" fill="none"/><rect x="2.5" y="11.5" width="13" height="2.5" fill="#f0e060" stroke="#a07010" stroke-width="0.9"/><g fill="#f0e060" stroke="#a07010" stroke-width="0.8"><rect x="2.5" y="15.5" width="3" height="2"/><rect x="7.5" y="15.5" width="3" height="2"/><rect x="12.5" y="15.5" width="3" height="2"/></g><path d="M23.5,9 L27.3,12.8 L31.2,9" stroke="#333" stroke-width="1" fill="none"/></svg>
<div style="left:119px;top:200px;width:31px;height:35px;background:#cce8ff;border:1px solid #99d1ff;box-sizing:border-box"></div>
<svg style="left:123px;top:207px;" width="26" height="24" viewBox="0 0 26 24"><rect x="1.3" y="1.3" width="23.2" height="21.2" rx="2.2" fill="#f2e96e" stroke="#7a5a10" stroke-width="1.4"/></svg>
<svg style="left:154px;top:207px;" width="25" height="23" viewBox="0 0 25 23"><path d="M1.2,1.2 L23.2,1.2 L11.8,21.6 Z" fill="#f2e96e" stroke="#7a5a10" stroke-width="1.3" stroke-linejoin="round"/></svg>
<svg style="left:230px;top:205.5px;" width="24" height="23" viewBox="0 0 24 23"><path d="M1,22.1 L22.9,22.1 L12,1.3 Z" fill="#ececec" stroke="#c4c4c4" stroke-width="1" stroke-linejoin="round"/></svg>
<div style="left:259px;top:202px;width:1px;height:32px;background:#808080"></div>
<div style="left:309px;top:202px;width:1px;height:32px;background:#808080"></div>
<svg style="left:316px;top:205px;" width="26" height="26" viewBox="0 0 26 26"><rect x="1.5" y="1.5" width="23" height="23" fill="#fff" stroke="#6a6a6a" stroke-width="1.1"/><rect x="2" y="2" width="22" height="3.5" fill="#e6e6e6"/><path d="M2,5.5 L24,5.5" stroke="#6a6a6a" stroke-width="0.8"/><g fill="#a0a0a0"><rect x="16" y="2.8" width="1.5" height="1.5"/><rect x="18.5" y="2.8" width="1.5" height="1.5"/></g><rect x="21" y="2.8" width="1.6" height="1.6" fill="#ff8080"/><rect x="3.5" y="9.5" width="19" height="10.5" fill="#fff" stroke="#6a6a6a" stroke-width="1"/><path d="M17.5,9.5 L17.5,20" stroke="#6a6a6a" stroke-width="0.9"/><path d="M18.5,14 L20,11 L21.5,14 Z M18.5,16 L20,19 L21.5,16 Z" fill="#000"/><path d="M17.5,15 L22.5,15" stroke="#6a6a6a" stroke-width="0.7"/></svg>
<div style="left:678px;top:160px;width:2px;height:2px;background:#c4c4c4"></div>
<div style="left:679px;top:161px;width:1px;height:1px;background:#a8a8a8"></div>
<div style="left:678px;top:164px;width:2px;height:2px;background:#c4c4c4"></div>
<div style="left:679px;top:165px;width:1px;height:1px;background:#a8a8a8"></div>
<div style="left:678px;top:168px;width:2px;height:2px;background:#c4c4c4"></div>
<div style="left:679px;top:169px;width:1px;height:1px;background:#a8a8a8"></div>
<div style="left:678px;top:172px;width:2px;height:2px;background:#c4c4c4"></div>
<div style="left:679px;top:173px;width:1px;height:1px;background:#a8a8a8"></div>
<div style="left:678px;top:176px;width:2px;height:2px;background:#c4c4c4"></div>
<div style="left:679px;top:177px;width:1px;height:1px;background:#a8a8a8"></div>
<div style="left:678px;top:180px;width:2px;height:2px;background:#c4c4c4"></div>
<div style="left:679px;top:181px;width:1px;height:1px;background:#a8a8a8"></div>
<div style="left:678px;top:184px;width:2px;height:2px;background:#c4c4c4"></div>
<div style="left:679px;top:185px;width:1px;height:1px;background:#a8a8a8"></div>
<div style="left:678px;top:188px;width:2px;height:2px;background:#c4c4c4"></div>
<div style="left:679px;top:189px;width:1px;height:1px;background:#a8a8a8"></div>
<div style="left:678px;top:192px;width:2px;height:2px;background:#c4c4c4"></div>
<div style="left:679px;top:193px;width:1px;height:1px;background:#a8a8a8"></div>
<svg style="left:687.9px;top:165.7px;" width="24" height="24" viewBox="0 0 24 24"><circle cx="12" cy="12" r="10.8" fill="#c4c4c4" stroke="#8a8a8a" stroke-width="1"/><circle cx="12" cy="12" r="8.6" fill="none" stroke="#989898" stroke-width="0.9"/><circle cx="12" cy="12" r="7.6" fill="#20d880" stroke="#6e6a4a" stroke-width="0.7"/><circle cx="12" cy="12" r="3.6" fill="#ffff00"/><circle cx="12" cy="12" r="1.1" fill="#000"/></svg>
<div style="left:751px;top:167px;width:38px;height:22px;background:#fff;border:1px solid #7a7a7a;box-sizing:border-box"></div>
<svg style="left:753px;top:168px;" width="34" height="20" viewBox="0 0 34 20"><path d="M5.5,2.5 L9,10 L12.5,2.5" stroke="#000" stroke-width="1" fill="none"/><rect x="2.5" y="11.5" width="13" height="2.5" fill="#f0e060" stroke="#a07010" stroke-width="0.9"/><g fill="#f0e060" stroke="#a07010" stroke-width="0.8"><rect x="2.5" y="15.5" width="3" height="2"/><rect x="7.5" y="15.5" width="3" height="2"/><rect x="12.5" y="15.5" width="3" height="2"/></g><path d="M23.5,9 L27.3,12.8 L31.2,9" stroke="#333" stroke-width="1" fill="none"/></svg>
<div style="left:789px;top:160px;width:31px;height:35px;background:#cce8ff;border:1px solid #99d1ff;box-sizing:border-box"></div>
<svg style="left:793px;top:167px;" width="26" height="24" viewBox="0 0 26 24"><rect x="1.3" y="1.3" width="23.2" height="21.2" rx="2.2" fill="#f2e96e" stroke="#7a5a10" stroke-width="1.4"/></svg>
<svg style="left:824px;top:167px;" width="25" height="23" viewBox="0 0 25 23"><path d="M1.2,1.2 L23.2,1.2 L11.8,21.6 Z" fill="#f2e96e" stroke="#7a5a10" stroke-width="1.3" stroke-linejoin="round"/></svg>
<svg style="left:900px;top:165.5px;" width="24" height="23" viewBox="0 0 24 23"><path d="M1,22.1 L22.9,22.1 L12,1.3 Z" fill="#ececec" stroke="#c4c4c4" stroke-width="1" stroke-linejoin="round"/></svg>
<div style="left:929px;top:162px;width:1px;height:32px;background:#808080"></div>
<div style="left:979px;top:162px;width:1px;height:32px;background:#808080"></div>
<svg style="left:986px;top:165px;" width="26" height="26" viewBox="0 0 26 26"><rect x="1.5" y="1.5" width="23" height="23" fill="#fff" stroke="#6a6a6a" stroke-width="1.1"/><rect x="2" y="2" width="22" height="3.5" fill="#e6e6e6"/><path d="M2,5.5 L24,5.5" stroke="#6a6a6a" stroke-width="0.8"/><g fill="#a0a0a0"><rect x="16" y="2.8" width="1.5" height="1.5"/><rect x="18.5" y="2.8" width="1.5" height="1.5"/></g><rect x="21" y="2.8" width="1.6" height="1.6" fill="#ff8080"/><rect x="3.5" y="9.5" width="19" height="10.5" fill="#fff" stroke="#6a6a6a" stroke-width="1"/><path d="M17.5,9.5 L17.5,20" stroke="#6a6a6a" stroke-width="0.9"/><path d="M18.5,14 L20,11 L21.5,14 Z M18.5,16 L20,19 L21.5,16 Z" fill="#000"/><path d="M17.5,15 L22.5,15" stroke="#6a6a6a" stroke-width="0.7"/></svg>
<div style="left:678px;top:200px;width:2px;height:2px;background:#c4c4c4"></div>
<div style="left:679px;top:201px;width:1px;height:1px;background:#a8a8a8"></div>
<div style="left:678px;top:204px;width:2px;height:2px;background:#c4c4c4"></div>
<div style="left:679px;top:205px;width:1px;height:1px;background:#a8a8a8"></div>
<div style="left:678px;top:208px;width:2px;height:2px;background:#c4c4c4"></div>
<div style="left:679px;top:209px;width:1px;height:1px;background:#a8a8a8"></div>
<div style="left:678px;top:212px;width:2px;height:2px;background:#c4c4c4"></div>
<div style="left:679px;top:213px;width:1px;height:1px;background:#a8a8a8"></div>
<div style="left:678px;top:216px;width:2px;height:2px;background:#c4c4c4"></div>
<div style="left:679px;top:217px;width:1px;height:1px;background:#a8a8a8"></div>
<div style="left:678px;top:220px;width:2px;height:2px;background:#c4c4c4"></div>
<div style="left:679px;top:221px;width:1px;height:1px;background:#a8a8a8"></div>
<div style="left:678px;top:224px;width:2px;height:2px;background:#c4c4c4"></div>
<div style="left:679px;top:225px;width:1px;height:1px;background:#a8a8a8"></div>
<div style="left:678px;top:228px;width:2px;height:2px;background:#c4c4c4"></div>
<div style="left:679px;top:229px;width:1px;height:1px;background:#a8a8a8"></div>
<div style="left:678px;top:232px;width:2px;height:2px;background:#c4c4c4"></div>
<div style="left:679px;top:233px;width:1px;height:1px;background:#a8a8a8"></div>
<svg style="left:687.9px;top:205.7px;" width="24" height="24" viewBox="0 0 24 24"><circle cx="12" cy="12" r="10.8" fill="#c4c4c4" stroke="#8a8a8a" stroke-width="1"/><circle cx="12" cy="12" r="8.6" fill="none" stroke="#989898" stroke-width="0.9"/><circle cx="12" cy="12" r="7.6" fill="#88e4f4" stroke="#6e6a4a" stroke-width="0.7"/><circle cx="12" cy="12" r="3.6" fill="#ffff00"/><circle cx="12" cy="12" r="1.1" fill="#000"/></svg>
<div style="left:751px;top:207px;width:38px;height:22px;background:#fff;border:1px solid #7a7a7a;box-sizing:border-box"></div>
<svg style="left:753px;top:208px;" width="34" height="20" viewBox="0 0 34 20"><path d="M5.5,2.5 L9,10 L12.5,2.5" stroke="#000" stroke-width="1" fill="none"/><rect x="2.5" y="11.5" width="13" height="2.5" fill="#f0e060" stroke="#a07010" stroke-width="0.9"/><g fill="#f0e060" stroke="#a07010" stroke-width="0.8"><rect x="2.5" y="15.5" width="3" height="2"/><rect x="7.5" y="15.5" width="3" height="2"/><rect x="12.5" y="15.5" width="3" height="2"/></g><path d="M23.5,9 L27.3,12.8 L31.2,9" stroke="#333" stroke-width="1" fill="none"/></svg>
<div style="left:789px;top:200px;width:31px;height:35px;background:#cce8ff;border:1px solid #99d1ff;box-sizing:border-box"></div>
<svg style="left:793px;top:207px;" width="26" height="24" viewBox="0 0 26 24"><rect x="1.3" y="1.3" width="23.2" height="21.2" rx="2.2" fill="#f2e96e" stroke="#7a5a10" stroke-width="1.4"/></svg>
<svg style="left:824px;top:207px;" width="25" height="23" viewBox="0 0 25 23"><path d="M1.2,1.2 L23.2,1.2 L11.8,21.6 Z" fill="#f2e96e" stroke="#7a5a10" stroke-width="1.3" stroke-linejoin="round"/></svg>
<svg style="left:900px;top:205.5px;" width="24" height="23" viewBox="0 0 24 23"><path d="M1,22.1 L22.9,22.1 L12,1.3 Z" fill="#ececec" stroke="#c4c4c4" stroke-width="1" stroke-linejoin="round"/></svg>
<div style="left:929px;top:202px;width:1px;height:32px;background:#808080"></div>
<div style="left:979px;top:202px;width:1px;height:32px;background:#808080"></div>
<svg style="left:986px;top:205px;" width="26" height="26" viewBox="0 0 26 26"><rect x="1.5" y="1.5" width="23" height="23" fill="#fff" stroke="#6a6a6a" stroke-width="1.1"/><rect x="2" y="2" width="22" height="3.5" fill="#e6e6e6"/><path d="M2,5.5 L24,5.5" stroke="#6a6a6a" stroke-width="0.8"/><g fill="#a0a0a0"><rect x="16" y="2.8" width="1.5" height="1.5"/><rect x="18.5" y="2.8" width="1.5" height="1.5"/></g><rect x="21" y="2.8" width="1.6" height="1.6" fill="#ff8080"/><rect x="3.5" y="9.5" width="19" height="10.5" fill="#fff" stroke="#6a6a6a" stroke-width="1"/><path d="M17.5,9.5 L17.5,20" stroke="#6a6a6a" stroke-width="0.9"/><path d="M18.5,14 L20,11 L21.5,14 Z M18.5,16 L20,19 L21.5,16 Z" fill="#000"/><path d="M17.5,15 L22.5,15" stroke="#6a6a6a" stroke-width="0.7"/></svg>
<div style="left:2px;top:245px;width:1022px;height:328px;background:#f0f0f0"></div>
<svg style="left:4px;top:249px;" width="8" height="7" viewBox="0 0 8 7"><path d="M1.5,0.5 L6.5,3.2 L1.5,6 Z" fill="#000"/></svg>
<div style="left:5px;top:257px;width:4px;height:312px;background:#a0a0a0"></div>
<div style="left:12px;top:247px;width:1px;height:323px;background:#a8a8a8"></div>
<div style="left:19px;top:262px;width:44px;height:285px;background:#000"></div>
<div style="left:19px;top:250px;width:43.5px;height:14px;background:#00ff00;border-radius:2.5px 2.5px 0 0"></div>
<div style="left:62px;top:250px;width:2px;height:297px;background:#a0a0a0"></div>
<div style="left:19px;top:546px;width:45px;height:1px;background:#a0a0a0"></div>
<div style="left:64px;top:249px;width:919px;height:37px;background:#fff;border:1px solid #a0a0a0;border-right-color:#a0a0a0;box-sizing:border-box"></div>
<div style="left:64px;top:285px;width:919px;height:2px;background:#c8c8c8"></div>
<div style="left:101px;top:254px;width:1px;height:29px;background:#a0a0a0"></div>
<div style="left:138px;top:254px;width:1px;height:29px;background:#a0a0a0"></div>
<div style="left:268px;top:254px;width:1px;height:29px;background:#a0a0a0"></div>
<div style="left:367px;top:254px;width:1px;height:29px;background:#a0a0a0"></div>
<div style="left:810px;top:254px;width:1px;height:29px;background:#a0a0a0"></div>
<svg style="left:71px;top:255px;" width="26" height="26" viewBox="0 0 26 26"><rect x="1.5" y="1.5" width="23.5" height="23.5" fill="#000" stroke="#4a4a4a" stroke-width="1"/><path d="M5.4,3.5 V23 M9.4,3.5 V23 M13.4,3.5 V23 M17.4,3.5 V23 M21.4,3.5 V23" stroke="#d8d8d8" stroke-width="1"/></svg>
<svg style="left:107px;top:256px;" width="28" height="25" viewBox="0 0 28 25"><rect x="2.3" y="1.5" width="7.5" height="4.2" fill="#10f010" stroke="#108010" stroke-width="0.9"/><rect x="2.3" y="10.6" width="7.5" height="4.2" fill="#10f8f8" stroke="#108080" stroke-width="0.9"/><rect x="2.3" y="19.4" width="7.5" height="4.2" fill="#1070f0" stroke="#102090" stroke-width="0.9"/><path d="M9.8,3.3 H26 M9.8,12.5 H26 M9.8,21.4 H26" stroke="#888" stroke-width="1"/><path d="M20.5,4 V20.8" stroke="#000" stroke-width="1.1"/><path d="M18.8,6.3 L20.5,4.3 L22.2,6.3 M18.8,10 L20.5,12 L22.2,10 M18.8,14.8 L20.5,12.8 L22.2,14.8 M18.8,18.6 L20.5,20.6 L22.2,18.6" stroke="#000" stroke-width="1.1" fill="none"/></svg>
<svg style="left:145px;top:256px;" width="27" height="25" viewBox="0 0 27 25"><rect x="1.5" y="1.5" width="24" height="22" fill="#fff" stroke="#707070" stroke-width="1"/><rect x="2" y="2" width="23" height="4" fill="#b8b8b8"/><path d="M7.5,2 V6 M13.5,2 V6 M19.5,2 V6" stroke="#fff" stroke-width="0.8"/><path d="M4,9.5 H12 M14,9.5 H17 M19,9.5 H23 M4,13 H12 M14,13 H17 M19,13 H23 M4,16.5 H12 M14,16.5 H17 M19,16.5 H23 M4,21 H7 M9,21 H12 M14,21 H17 M19,21 H23" stroke="#000" stroke-width="1.1"/></svg>
<svg style="left:176px;top:255px;" width="26" height="26" viewBox="0 0 26 26"><rect x="1" y="1" width="24" height="24" fill="#000" stroke="#606060" stroke-width="1"/><path d="M5,23 V3 M20.5,23 V3" stroke="#e8e8e8" stroke-width="1"/><path d="M2.5,12 L12.5,4.5 L24,10.5" stroke="#10e010" stroke-width="2.2" fill="none"/></svg>
<svg style="left:207px;top:255px;" width="26" height="26" viewBox="0 0 26 26"><rect x="1" y="1" width="24" height="24" fill="#000" stroke="#606060" stroke-width="1"/><path d="M3,7.5 H23 M3,19.5 H23" stroke="#e8e8e8" stroke-width="1"/><path d="M2.5,14.5 L12.5,5.5 L24,10.5" stroke="#10e010" stroke-width="2.2" fill="none"/></svg>
<svg style="left:238px;top:255px;" width="26" height="26" viewBox="0 0 26 26"><rect x="1" y="1" width="24" height="24" fill="#b4b4b4" stroke="#c8c8c8" stroke-width="1"/><path d="M5,2 V24 M21,2 V24 M2,5 H24 M2,21 H24" stroke="#eaeaea" stroke-width="1.2"/><path d="M9,11 Q13,7 17,11 M17,15 Q13,19 9,15" stroke="#cfcfcf" stroke-width="1.2" fill="none"/></svg>
<svg style="left:274px;top:254px;" width="28" height="28" viewBox="0 0 28 28"><path d="M15.5,16.5 L24.5,25" stroke="#ff0000" stroke-width="3.2" stroke-linecap="round"/><circle cx="10.3" cy="10.3" r="7.6" fill="#e0f8ff" stroke="#000" stroke-width="1.6"/><path d="M6,10.3 H14.6 M10.3,6 V14.6" stroke="#000" stroke-width="1.5"/></svg>
<svg style="left:305px;top:254px;" width="28" height="28" viewBox="0 0 28 28"><path d="M15.5,16.5 L24.5,25" stroke="#b4b4b4" stroke-width="3.2" stroke-linecap="round"/><circle cx="10.3" cy="10.3" r="7.6" fill="#fff" stroke="#b4b4b4" stroke-width="1.3"/><path d="M6.5,10.3 H14" stroke="#b4b4b4" stroke-width="1.3"/></svg>
<svg style="left:336px;top:254px;" width="28" height="28" viewBox="0 0 28 28"><path d="M15.5,16.5 L24.5,25" stroke="#b4b4b4" stroke-width="3.2" stroke-linecap="round"/><circle cx="10.3" cy="10.3" r="7.6" fill="#fff" stroke="#b4b4b4" stroke-width="1.3"/><path d="M7,7.5 V13 M13.6,7.5 V13" stroke="#b4b4b4" stroke-width="1.2"/><rect x="9.8" y="8.5" width="1" height="1" fill="#999"/><rect x="9.8" y="11.5" width="1" height="1" fill="#999"/></svg>
<svg style="left:375px;top:258px;" width="26" height="22" viewBox="0 0 26 22"><path d="M7,1 L22,16 M22,1 L7,19 " stroke="#d0d0d0" stroke-width="1.4"/><path d="M1.5,10 Q12,0 24,10 Q12,19 1.5,10 Z" fill="#fff" stroke="#a8a8a8" stroke-width="1.5"/><circle cx="13" cy="10" r="4" fill="#a0a0a0"/><circle cx="13" cy="10" r="1.5" fill="#e0e0e0"/></svg>
<svg style="left:748px;top:255px;" width="27" height="26" viewBox="0 0 27 26"><rect x="1.5" y="1.5" width="22" height="13" rx="2" fill="#ffff80" stroke="#000" stroke-width="0.9"/><text x="3" y="7" font-size="4.2" font-family="Liberation Sans" fill="#000">Comment</text><text x="3" y="12" font-size="4.2" font-family="Liberation Sans" fill="#000">Text</text><rect x="9" y="13.5" width="4" height="2" fill="#ff0000"/><path d="M12,15 L22,23" stroke="#000" stroke-width="1.2"/><path d="M18.5,24.5 L24.5,24.5 L24.5,18.5 Z" fill="#000"/></svg>
<svg style="left:779px;top:255px;" width="27" height="26" viewBox="0 0 27 26"><rect x="1.5" y="6.3" width="23.5" height="13.2" rx="2.5" fill="#ffff80" stroke="#000" stroke-width="1"/><rect x="11.5" y="18" width="4" height="2" fill="#ff0000"/><path d="M2.3,4.6 L4.6,2.3 L13.1,10.4 L21.6,2.3 L23.9,4.6 L15.4,12.8 L23.9,21.2 L21.6,23.5 L13.1,15.2 L4.6,23.5 L2.3,21.2 L10.8,12.8 Z" fill="#f8a0a0" stroke="#e01818" stroke-width="1.1"/></svg>
<svg style="left:816px;top:255px;" width="26" height="26" viewBox="0 0 26 26"><rect x="0.5" y="0.5" width="25" height="25" fill="#000" stroke="#606060" stroke-width="1"/><rect x="3" y="4" width="3" height="3" fill="#10e010"/><rect x="3" y="9.5" width="3" height="3" fill="#10e0f0"/><text x="7.5" y="8" font-size="6.5" font-family="Liberation Sans" fill="#e0e0e0">Ch1</text><text x="7.5" y="13.5" font-size="6.5" font-family="Liberation Sans" fill="#e0e0e0">Ch2</text></svg>
<svg style="left:847px;top:255px;" width="26" height="26" viewBox="0 0 26 26"><rect x="0.5" y="0.5" width="25" height="25" fill="#000" stroke="#606060" stroke-width="1"/><path d="M2.5,13 Q6,2 9,5 Q12,9 15,14 Q17,16 19,13 L22.5,10" stroke="#10f010" stroke-width="2" fill="none"/><path d="M2.5,16.5 Q6,22.5 9.5,20 Q13,16 16,14 Q19,13 23,19" stroke="#10e8f8" stroke-width="2" fill="none"/></svg>
<svg style="left:878px;top:255px;" width="26" height="26" viewBox="0 0 26 26"><rect x="0.5" y="0.5" width="25" height="25" fill="#fafafa" stroke="#c8c8c8" stroke-width="1"/><path d="M1,3.5 H25" stroke="#d8d8d8" stroke-width="2"/><rect x="2.5" y="13.5" width="10" height="10" fill="#b8b8b8"/><path d="M3.5,19 Q5,15 7.5,19 T11.5,19" stroke="#e8e8e8" stroke-width="0.8" fill="none"/><path d="M13,13 L21,6 M17,6 H21 V10" stroke="#b0b0b0" stroke-width="1.2" fill="none"/></svg>
<svg style="left:908px;top:253px;" width="28" height="28" viewBox="0 0 28 28"><path d="M1.9,6.1 L6.1,1.9 L17.1,12.9 L12.9,17.1 Z" fill="#f0a030" stroke="#603808" stroke-width="1"/><path d="M3.5,6.5 L14.5,17.5 M6.5,3.5 L17.5,14.5" stroke="#c06010" stroke-width="0.7"/><path d="M12.9,17.1 L17.1,12.9 L20.1,15.9 L15.9,20.1 Z" fill="#c8c8c8" stroke="#202020" stroke-width="1"/><path d="M15.9,20.1 L20.1,15.9 L22.6,18.4 L18.4,22.6 Z" fill="#b83010" stroke="#401808" stroke-width="0.8"/><path d="M17,23.5 Q21,27 25,24.5 Q27.5,21.5 24,19" stroke="#d8d8d8" stroke-width="0.9" fill="none"/></svg>
<svg style="left:941px;top:256px;" width="24" height="24" viewBox="0 0 24 24"><path d="M2,2 L22,22 M22,2 L2,22" stroke="#cccccc" stroke-width="4"/></svg>
<svg style="left:64px;top:287px;" width="919" height="245" viewBox="0 0 919 245"><rect x="0" y="0" width="919" height="245" fill="#000"/><path d="M0,30h1v1h-1zM0,61h1v1h-1zM0,92h1v1h-1zM0,122h1v1h-1zM0,152h1v1h-1zM0,183h1v1h-1zM0,214h1v1h-1zM18,30h1v1h-1zM18,61h1v1h-1zM18,92h1v1h-1zM18,122h1v1h-1zM18,152h1v1h-1zM18,183h1v1h-1zM18,214h1v1h-1zM37,30h1v1h-1zM37,61h1v1h-1zM37,92h1v1h-1zM37,122h1v1h-1zM37,152h1v1h-1zM37,183h1v1h-1zM37,214h1v1h-1zM55,30h1v1h-1zM55,61h1v1h-1zM55,92h1v1h-1zM55,122h1v1h-1zM55,152h1v1h-1zM55,183h1v1h-1zM55,214h1v1h-1zM74,30h1v1h-1zM74,61h1v1h-1zM74,92h1v1h-1zM74,122h1v1h-1zM74,152h1v1h-1zM74,183h1v1h-1zM74,214h1v1h-1zM92,0h1v1h-1zM92,6h1v1h-1zM92,12h1v1h-1zM92,18h1v1h-1zM92,24h1v1h-1zM92,30h1v1h-1zM92,37h1v1h-1zM92,43h1v1h-1zM92,49h1v1h-1zM92,55h1v1h-1zM92,61h1v1h-1zM92,67h1v1h-1zM92,73h1v1h-1zM92,79h1v1h-1zM92,85h1v1h-1zM92,92h1v1h-1zM92,98h1v1h-1zM92,104h1v1h-1zM92,110h1v1h-1zM92,116h1v1h-1zM92,122h1v1h-1zM92,128h1v1h-1zM92,134h1v1h-1zM92,140h1v1h-1zM92,146h1v1h-1zM92,152h1v1h-1zM92,159h1v1h-1zM92,165h1v1h-1zM92,171h1v1h-1zM92,177h1v1h-1zM92,183h1v1h-1zM92,189h1v1h-1zM92,195h1v1h-1zM92,201h1v1h-1zM92,207h1v1h-1zM92,214h1v1h-1zM92,220h1v1h-1zM92,226h1v1h-1zM92,232h1v1h-1zM92,238h1v1h-1zM92,244h1v1h-1zM110,30h1v1h-1zM110,61h1v1h-1zM110,92h1v1h-1zM110,122h1v1h-1zM110,152h1v1h-1zM110,183h1v1h-1zM110,214h1v1h-1zM129,30h1v1h-1zM129,61h1v1h-1zM129,92h1v1h-1zM129,122h1v1h-1zM129,152h1v1h-1zM129,183h1v1h-1zM129,214h1v1h-1zM147,30h1v1h-1zM147,61h1v1h-1zM147,92h1v1h-1zM147,122h1v1h-1zM147,152h1v1h-1zM147,183h1v1h-1zM147,214h1v1h-1zM165,30h1v1h-1zM165,61h1v1h-1zM165,92h1v1h-1zM165,122h1v1h-1zM165,152h1v1h-1zM165,183h1v1h-1zM165,214h1v1h-1zM184,0h1v1h-1zM184,6h1v1h-1zM184,12h1v1h-1zM184,18h1v1h-1zM184,24h1v1h-1zM184,30h1v1h-1zM184,37h1v1h-1zM184,43h1v1h-1zM184,49h1v1h-1zM184,55h1v1h-1zM184,61h1v1h-1zM184,67h1v1h-1zM184,73h1v1h-1zM184,79h1v1h-1zM184,85h1v1h-1zM184,92h1v1h-1zM184,98h1v1h-1zM184,104h1v1h-1zM184,110h1v1h-1zM184,116h1v1h-1zM184,122h1v1h-1zM184,128h1v1h-1zM184,134h1v1h-1zM184,140h1v1h-1zM184,146h1v1h-1zM184,152h1v1h-1zM184,159h1v1h-1zM184,165h1v1h-1zM184,171h1v1h-1zM184,177h1v1h-1zM184,183h1v1h-1zM184,189h1v1h-1zM184,195h1v1h-1zM184,201h1v1h-1zM184,207h1v1h-1zM184,214h1v1h-1zM184,220h1v1h-1zM184,226h1v1h-1zM184,232h1v1h-1zM184,238h1v1h-1zM184,244h1v1h-1zM202,30h1v1h-1zM202,61h1v1h-1zM202,92h1v1h-1zM202,122h1v1h-1zM202,152h1v1h-1zM202,183h1v1h-1zM202,214h1v1h-1zM221,30h1v1h-1zM221,61h1v1h-1zM221,92h1v1h-1zM221,122h1v1h-1zM221,152h1v1h-1zM221,183h1v1h-1zM221,214h1v1h-1zM239,30h1v1h-1zM239,61h1v1h-1zM239,92h1v1h-1zM239,122h1v1h-1zM239,152h1v1h-1zM239,183h1v1h-1zM239,214h1v1h-1zM257,30h1v1h-1zM257,61h1v1h-1zM257,92h1v1h-1zM257,122h1v1h-1zM257,152h1v1h-1zM257,183h1v1h-1zM257,214h1v1h-1zM276,0h1v1h-1zM276,6h1v1h-1zM276,12h1v1h-1zM276,18h1v1h-1zM276,24h1v1h-1zM276,30h1v1h-1zM276,37h1v1h-1zM276,43h1v1h-1zM276,49h1v1h-1zM276,55h1v1h-1zM276,61h1v1h-1zM276,67h1v1h-1zM276,73h1v1h-1zM276,79h1v1h-1zM276,85h1v1h-1zM276,92h1v1h-1zM276,98h1v1h-1zM276,104h1v1h-1zM276,110h1v1h-1zM276,116h1v1h-1zM276,122h1v1h-1zM276,128h1v1h-1zM276,134h1v1h-1zM276,140h1v1h-1zM276,146h1v1h-1zM276,152h1v1h-1zM276,159h1v1h-1zM276,165h1v1h-1zM276,171h1v1h-1zM276,177h1v1h-1zM276,183h1v1h-1zM276,189h1v1h-1zM276,195h1v1h-1zM276,201h1v1h-1zM276,207h1v1h-1zM276,214h1v1h-1zM276,220h1v1h-1zM276,226h1v1h-1zM276,232h1v1h-1zM276,238h1v1h-1zM276,244h1v1h-1zM294,30h1v1h-1zM294,61h1v1h-1zM294,92h1v1h-1zM294,122h1v1h-1zM294,152h1v1h-1zM294,183h1v1h-1zM294,214h1v1h-1zM312,30h1v1h-1zM312,61h1v1h-1zM312,92h1v1h-1zM312,122h1v1h-1zM312,152h1v1h-1zM312,183h1v1h-1zM312,214h1v1h-1zM331,30h1v1h-1zM331,61h1v1h-1zM331,92h1v1h-1zM331,122h1v1h-1zM331,152h1v1h-1zM331,183h1v1h-1zM331,214h1v1h-1zM349,30h1v1h-1zM349,61h1v1h-1zM349,92h1v1h-1zM349,122h1v1h-1zM349,152h1v1h-1zM349,183h1v1h-1zM349,214h1v1h-1zM368,0h1v1h-1zM368,6h1v1h-1zM368,12h1v1h-1zM368,18h1v1h-1zM368,24h1v1h-1zM368,30h1v1h-1zM368,37h1v1h-1zM368,43h1v1h-1zM368,49h1v1h-1zM368,55h1v1h-1zM368,61h1v1h-1zM368,67h1v1h-1zM368,73h1v1h-1zM368,79h1v1h-1zM368,85h1v1h-1zM368,92h1v1h-1zM368,98h1v1h-1zM368,104h1v1h-1zM368,110h1v1h-1zM368,116h1v1h-1zM368,122h1v1h-1zM368,128h1v1h-1zM368,134h1v1h-1zM368,140h1v1h-1zM368,146h1v1h-1zM368,152h1v1h-1zM368,159h1v1h-1zM368,165h1v1h-1zM368,171h1v1h-1zM368,177h1v1h-1zM368,183h1v1h-1zM368,189h1v1h-1zM368,195h1v1h-1zM368,201h1v1h-1zM368,207h1v1h-1zM368,214h1v1h-1zM368,220h1v1h-1zM368,226h1v1h-1zM368,232h1v1h-1zM368,238h1v1h-1zM368,244h1v1h-1zM386,30h1v1h-1zM386,61h1v1h-1zM386,92h1v1h-1zM386,122h1v1h-1zM386,152h1v1h-1zM386,183h1v1h-1zM386,214h1v1h-1zM404,30h1v1h-1zM404,61h1v1h-1zM404,92h1v1h-1zM404,122h1v1h-1zM404,152h1v1h-1zM404,183h1v1h-1zM404,214h1v1h-1zM423,30h1v1h-1zM423,61h1v1h-1zM423,92h1v1h-1zM423,122h1v1h-1zM423,152h1v1h-1zM423,183h1v1h-1zM423,214h1v1h-1zM441,30h1v1h-1zM441,61h1v1h-1zM441,92h1v1h-1zM441,122h1v1h-1zM441,152h1v1h-1zM441,183h1v1h-1zM441,214h1v1h-1zM460,0h1v1h-1zM460,6h1v1h-1zM460,12h1v1h-1zM460,18h1v1h-1zM460,24h1v1h-1zM460,30h1v1h-1zM460,37h1v1h-1zM460,43h1v1h-1zM460,49h1v1h-1zM460,55h1v1h-1zM460,61h1v1h-1zM460,67h1v1h-1zM460,73h1v1h-1zM460,79h1v1h-1zM460,85h1v1h-1zM460,92h1v1h-1zM460,98h1v1h-1zM460,104h1v1h-1zM460,110h1v1h-1zM460,116h1v1h-1zM460,122h1v1h-1zM460,128h1v1h-1zM460,134h1v1h-1zM460,140h1v1h-1zM460,146h1v1h-1zM460,152h1v1h-1zM460,159h1v1h-1zM460,165h1v1h-1zM460,171h1v1h-1zM460,177h1v1h-1zM460,183h1v1h-1zM460,189h1v1h-1zM460,195h1v1h-1zM460,201h1v1h-1zM460,207h1v1h-1zM460,214h1v1h-1zM460,220h1v1h-1zM460,226h1v1h-1zM460,232h1v1h-1zM460,238h1v1h-1zM460,244h1v1h-1zM478,30h1v1h-1zM478,61h1v1h-1zM478,92h1v1h-1zM478,122h1v1h-1zM478,152h1v1h-1zM478,183h1v1h-1zM478,214h1v1h-1zM496,30h1v1h-1zM496,61h1v1h-1zM496,92h1v1h-1zM496,122h1v1h-1zM496,152h1v1h-1zM496,183h1v1h-1zM496,214h1v1h-1zM515,30h1v1h-1zM515,61h1v1h-1zM515,92h1v1h-1zM515,122h1v1h-1zM515,152h1v1h-1zM515,183h1v1h-1zM515,214h1v1h-1zM533,30h1v1h-1zM533,61h1v1h-1zM533,92h1v1h-1zM533,122h1v1h-1zM533,152h1v1h-1zM533,183h1v1h-1zM533,214h1v1h-1zM551,0h1v1h-1zM551,6h1v1h-1zM551,12h1v1h-1zM551,18h1v1h-1zM551,24h1v1h-1zM551,30h1v1h-1zM551,37h1v1h-1zM551,43h1v1h-1zM551,49h1v1h-1zM551,55h1v1h-1zM551,61h1v1h-1zM551,67h1v1h-1zM551,73h1v1h-1zM551,79h1v1h-1zM551,85h1v1h-1zM551,92h1v1h-1zM551,98h1v1h-1zM551,104h1v1h-1zM551,110h1v1h-1zM551,116h1v1h-1zM551,122h1v1h-1zM551,128h1v1h-1zM551,134h1v1h-1zM551,140h1v1h-1zM551,146h1v1h-1zM551,152h1v1h-1zM551,159h1v1h-1zM551,165h1v1h-1zM551,171h1v1h-1zM551,177h1v1h-1zM551,183h1v1h-1zM551,189h1v1h-1zM551,195h1v1h-1zM551,201h1v1h-1zM551,207h1v1h-1zM551,214h1v1h-1zM551,220h1v1h-1zM551,226h1v1h-1zM551,232h1v1h-1zM551,238h1v1h-1zM551,244h1v1h-1zM570,30h1v1h-1zM570,61h1v1h-1zM570,92h1v1h-1zM570,122h1v1h-1zM570,152h1v1h-1zM570,183h1v1h-1zM570,214h1v1h-1zM588,30h1v1h-1zM588,61h1v1h-1zM588,92h1v1h-1zM588,122h1v1h-1zM588,152h1v1h-1zM588,183h1v1h-1zM588,214h1v1h-1zM607,30h1v1h-1zM607,61h1v1h-1zM607,92h1v1h-1zM607,122h1v1h-1zM607,152h1v1h-1zM607,183h1v1h-1zM607,214h1v1h-1zM625,30h1v1h-1zM625,61h1v1h-1zM625,92h1v1h-1zM625,122h1v1h-1zM625,152h1v1h-1zM625,183h1v1h-1zM625,214h1v1h-1zM643,0h1v1h-1zM643,6h1v1h-1zM643,12h1v1h-1zM643,18h1v1h-1zM643,24h1v1h-1zM643,30h1v1h-1zM643,37h1v1h-1zM643,43h1v1h-1zM643,49h1v1h-1zM643,55h1v1h-1zM643,61h1v1h-1zM643,67h1v1h-1zM643,73h1v1h-1zM643,79h1v1h-1zM643,85h1v1h-1zM643,92h1v1h-1zM643,98h1v1h-1zM643,104h1v1h-1zM643,110h1v1h-1zM643,116h1v1h-1zM643,122h1v1h-1zM643,128h1v1h-1zM643,134h1v1h-1zM643,140h1v1h-1zM643,146h1v1h-1zM643,152h1v1h-1zM643,159h1v1h-1zM643,165h1v1h-1zM643,171h1v1h-1zM643,177h1v1h-1zM643,183h1v1h-1zM643,189h1v1h-1zM643,195h1v1h-1zM643,201h1v1h-1zM643,207h1v1h-1zM643,214h1v1h-1zM643,220h1v1h-1zM643,226h1v1h-1zM643,232h1v1h-1zM643,238h1v1h-1zM643,244h1v1h-1zM662,30h1v1h-1zM662,61h1v1h-1zM662,92h1v1h-1zM662,122h1v1h-1zM662,152h1v1h-1zM662,183h1v1h-1zM662,214h1v1h-1zM680,30h1v1h-1zM680,61h1v1h-1zM680,92h1v1h-1zM680,122h1v1h-1zM680,152h1v1h-1zM680,183h1v1h-1zM680,214h1v1h-1zM698,30h1v1h-1zM698,61h1v1h-1zM698,92h1v1h-1zM698,122h1v1h-1zM698,152h1v1h-1zM698,183h1v1h-1zM698,214h1v1h-1zM717,30h1v1h-1zM717,61h1v1h-1zM717,92h1v1h-1zM717,122h1v1h-1zM717,152h1v1h-1zM717,183h1v1h-1zM717,214h1v1h-1zM735,0h1v1h-1zM735,6h1v1h-1zM735,12h1v1h-1zM735,18h1v1h-1zM735,24h1v1h-1zM735,30h1v1h-1zM735,37h1v1h-1zM735,43h1v1h-1zM735,49h1v1h-1zM735,55h1v1h-1zM735,61h1v1h-1zM735,67h1v1h-1zM735,73h1v1h-1zM735,79h1v1h-1zM735,85h1v1h-1zM735,92h1v1h-1zM735,98h1v1h-1zM735,104h1v1h-1zM735,110h1v1h-1zM735,116h1v1h-1zM735,122h1v1h-1zM735,128h1v1h-1zM735,134h1v1h-1zM735,140h1v1h-1zM735,146h1v1h-1zM735,152h1v1h-1zM735,159h1v1h-1zM735,165h1v1h-1zM735,171h1v1h-1zM735,177h1v1h-1zM735,183h1v1h-1zM735,189h1v1h-1zM735,195h1v1h-1zM735,201h1v1h-1zM735,207h1v1h-1zM735,214h1v1h-1zM735,220h1v1h-1zM735,226h1v1h-1zM735,232h1v1h-1zM735,238h1v1h-1zM735,244h1v1h-1zM754,30h1v1h-1zM754,61h1v1h-1zM754,92h1v1h-1zM754,122h1v1h-1zM754,152h1v1h-1zM754,183h1v1h-1zM754,214h1v1h-1zM772,30h1v1h-1zM772,61h1v1h-1zM772,92h1v1h-1zM772,122h1v1h-1zM772,152h1v1h-1zM772,183h1v1h-1zM772,214h1v1h-1zM790,30h1v1h-1zM790,61h1v1h-1zM790,92h1v1h-1zM790,122h1v1h-1zM790,152h1v1h-1zM790,183h1v1h-1zM790,214h1v1h-1zM809,30h1v1h-1zM809,61h1v1h-1zM809,92h1v1h-1zM809,122h1v1h-1zM809,152h1v1h-1zM809,183h1v1h-1zM809,214h1v1h-1zM827,0h1v1h-1zM827,6h1v1h-1zM827,12h1v1h-1zM827,18h1v1h-1zM827,24h1v1h-1zM827,30h1v1h-1zM827,37h1v1h-1zM827,43h1v1h-1zM827,49h1v1h-1zM827,55h1v1h-1zM827,61h1v1h-1zM827,67h1v1h-1zM827,73h1v1h-1zM827,79h1v1h-1zM827,85h1v1h-1zM827,92h1v1h-1zM827,98h1v1h-1zM827,104h1v1h-1zM827,110h1v1h-1zM827,116h1v1h-1zM827,122h1v1h-1zM827,128h1v1h-1zM827,134h1v1h-1zM827,140h1v1h-1zM827,146h1v1h-1zM827,152h1v1h-1zM827,159h1v1h-1zM827,165h1v1h-1zM827,171h1v1h-1zM827,177h1v1h-1zM827,183h1v1h-1zM827,189h1v1h-1zM827,195h1v1h-1zM827,201h1v1h-1zM827,207h1v1h-1zM827,214h1v1h-1zM827,220h1v1h-1zM827,226h1v1h-1zM827,232h1v1h-1zM827,238h1v1h-1zM827,244h1v1h-1zM845,30h1v1h-1zM845,61h1v1h-1zM845,92h1v1h-1zM845,122h1v1h-1zM845,152h1v1h-1zM845,183h1v1h-1zM845,214h1v1h-1zM864,30h1v1h-1zM864,61h1v1h-1zM864,92h1v1h-1zM864,122h1v1h-1zM864,152h1v1h-1zM864,183h1v1h-1zM864,214h1v1h-1zM882,30h1v1h-1zM882,61h1v1h-1zM882,92h1v1h-1zM882,122h1v1h-1zM882,152h1v1h-1zM882,183h1v1h-1zM882,214h1v1h-1zM901,30h1v1h-1zM901,61h1v1h-1zM901,92h1v1h-1zM901,122h1v1h-1zM901,152h1v1h-1zM901,183h1v1h-1zM901,214h1v1h-1zM919,0h1v1h-1zM919,6h1v1h-1zM919,12h1v1h-1zM919,18h1v1h-1zM919,24h1v1h-1zM919,30h1v1h-1zM919,37h1v1h-1zM919,43h1v1h-1zM919,49h1v1h-1zM919,55h1v1h-1zM919,61h1v1h-1zM919,67h1v1h-1zM919,73h1v1h-1zM919,79h1v1h-1zM919,85h1v1h-1zM919,92h1v1h-1zM919,98h1v1h-1zM919,104h1v1h-1zM919,110h1v1h-1zM919,116h1v1h-1zM919,122h1v1h-1zM919,128h1v1h-1zM919,134h1v1h-1zM919,140h1v1h-1zM919,146h1v1h-1zM919,152h1v1h-1zM919,159h1v1h-1zM919,165h1v1h-1zM919,171h1v1h-1zM919,177h1v1h-1zM919,183h1v1h-1zM919,189h1v1h-1zM919,195h1v1h-1zM919,201h1v1h-1zM919,207h1v1h-1zM919,214h1v1h-1zM919,220h1v1h-1zM919,226h1v1h-1zM919,232h1v1h-1zM919,238h1v1h-1zM919,244h1v1h-1z" fill="#d0d0d0" shape-rendering="crispEdges"/><path d="M0.00,166.50 L0.25,175.47 L0.50,167.48 L0.75,176.61 L1.00,167.76 L1.25,173.48 L1.50,165.45 L1.75,173.22 L2.00,164.24 L2.25,174.72 L2.50,165.34 L2.75,174.62 L3.00,163.90 L3.25,173.92 L3.50,167.33 L3.75,175.77 L4.00,168.37 L4.25,174.18 L4.50,167.12 L4.75,173.28 L5.00,163.74 L5.25,173.04 L5.50,164.28 L5.75,173.61 L6.00,166.61 L6.25,173.36 L6.50,163.50 L6.75,174.85 L7.00,163.85 L7.25,175.04 L7.50,164.06 L7.75,171.66 L8.00,165.83 L8.25,172.82 L8.50,164.59 L8.75,171.63 L9.00,165.62 L9.25,174.16 L9.50,163.38 L9.75,178.97 L10.00,163.90 L10.25,172.65 L10.50,163.77 L10.75,172.36 L11.00,165.14 L11.25,170.42 L11.50,165.76 L11.75,172.07 L12.00,162.98 L12.25,172.29 L12.50,173.19 L12.75,179.16 L13.00,163.34 L13.25,170.01 L13.50,162.74 L13.75,172.09 L14.00,163.33 L14.25,170.76 L14.50,163.59 L14.75,171.11 L15.00,163.31 L15.25,171.38 L15.50,163.40 L15.75,166.09 L16.00,163.61 L16.25,170.36 L16.50,168.69 L16.75,169.34 L17.00,162.92 L17.25,169.54 L17.50,163.49 L17.75,170.95 L18.00,163.73 L18.25,170.65 L18.50,161.87 L18.75,169.41 L19.00,163.27 L19.25,168.88 L19.50,159.34 L19.75,167.98 L20.00,161.11 L20.25,176.08 L20.50,163.73 L20.75,168.75 L21.00,161.89 L21.25,167.94 L21.50,163.87 L21.75,167.74 L22.00,162.02 L22.25,169.05 L22.50,161.41 L22.75,168.79 L23.00,162.04 L23.25,168.24 L23.50,161.17 L23.75,167.19 L24.00,161.83 L24.25,168.70 L24.50,162.00 L24.75,168.55 L25.00,162.99 L25.25,164.42 L25.50,162.93 L25.75,166.87 L26.00,162.64 L26.25,167.82 L26.50,161.69 L26.75,166.19 L27.00,161.00 L27.25,167.33 L27.50,161.61 L27.75,165.70 L28.00,161.14 L28.25,166.17 L28.50,162.03 L28.75,165.64 L29.00,160.88 L29.25,165.70 L29.50,159.84 L29.75,164.62 L30.00,159.73 L30.25,164.52 L30.50,158.73 L30.75,164.36 L31.00,160.50 L31.25,165.11 L31.50,160.54 L31.75,164.30 L32.00,159.84 L32.25,164.43 L32.50,159.09 L32.75,163.45 L33.00,158.84 L33.25,164.47 L33.50,158.72 L33.75,163.87 L34.00,158.67 L34.25,162.58 L34.50,159.92 L34.75,163.69 L35.00,158.92 L35.25,163.06 L35.50,165.18 L35.75,162.62 L36.00,159.09 L36.25,162.91 L36.50,157.63 L36.75,161.61 L37.00,154.79 L37.25,162.07 L37.50,157.46 L37.75,156.91 L38.00,157.12 L38.25,161.06 L38.50,157.30 L38.75,160.18 L39.00,156.65 L39.25,160.74 L39.50,156.41 L39.75,160.15 L40.00,161.34 L40.25,159.68 L40.50,156.04 L40.75,159.26 L41.00,155.36 L41.25,155.88 L41.50,155.34 L41.75,157.79 L42.00,155.77 L42.25,157.96 L42.50,154.83 L42.75,157.83 L43.00,154.26 L43.25,156.64 L43.50,154.20 L43.75,157.08 L44.00,153.73 L44.25,156.31 L44.50,150.75 L44.75,155.24 L45.00,153.22 L45.25,154.82 L45.50,153.17 L45.75,154.81 L46.00,152.37 L46.25,154.35 L46.50,151.91 L46.75,153.89 L47.00,151.61 L47.25,153.62 L47.50,151.18 L47.75,153.04 L48.00,150.68 L48.25,152.88 L48.50,150.61 L48.75,152.16 L49.00,149.93 L49.25,151.92 L49.50,149.91 L49.75,150.89 L50.00,149.00 L50.25,150.44 L50.50,148.57 L50.75,149.60 L51.00,148.21 L51.25,149.15 L51.50,147.44 L51.75,148.38 L52.00,146.95 L52.25,147.98 L52.50,146.35 L52.75,146.75 L53.00,145.34 L53.25,145.97 L53.50,144.91 L53.75,145.47 L54.00,144.07 L54.25,144.45 L54.50,143.08 L54.75,143.84 L55.00,142.59 L55.25,143.21 L55.50,141.67 L55.75,142.09 L56.00,140.59 L56.25,141.27 L56.50,136.62 L56.75,140.36 L57.00,138.85 L57.25,139.46 L57.50,138.19 L57.75,138.32 L58.00,136.91 L58.25,137.37 L58.50,135.90 L58.75,136.69 L59.50,134.50 L61.50,130.50 L63.00,126.50 L64.30,122.00 L65.50,116.50 L66.60,110.50 L67.60,105.00 L68.60,101.00 L69.60,98.60 L70.50,98.30 L71.50,99.00 L73.00,101.50 L75.00,101.00 L77.00,100.50 L86.00,100.80 L136.00,101.30 L236.00,101.00 L352.00,99.80 L389.00,98.50 L417.00,96.60 L431.00,95.00 L440.00,92.70 L446.00,89.50 L452.00,84.70 L455.00,79.00 L457.00,70.00 L458.50,58.00 L459.50,44.00 L460.50,49.00 L464.00,73.00 L468.00,101.00 L471.50,123.00 L473.00,153.00 L473.30,198.00 L473.80,198.00 L474.30,153.00 L475.00,131.00 L477.00,123.00 L482.00,116.00 L488.00,112.50 L496.00,109.80 L505.00,108.30 L516.00,106.60 L544.00,105.60 L583.00,104.40 L633.60,103.50 L806.00,103.20 L806.00,103.07 L807.00,103.44 L808.00,103.42 L809.00,103.83 L810.00,102.82 L811.00,103.65 L812.00,103.33 L813.00,103.71 L814.00,103.61 L815.00,103.67 L816.00,103.78 L817.00,103.92 L818.00,103.28 L819.00,103.05 L820.00,103.42 L821.00,103.60 L822.00,102.84 L823.00,102.84 L824.00,102.29 L825.00,103.48 L826.00,103.98 L827.00,102.75 L828.00,102.34 L829.00,102.41 L830.00,102.85 L831.00,102.58 L832.00,103.94 L833.00,102.12 L834.00,102.62 L835.00,102.23 L836.00,103.30 L837.00,103.55 L838.00,102.36 L839.00,102.12 L840.00,102.92 L841.00,103.17 L842.00,103.82 L843.00,102.07 L844.00,102.22 L845.00,103.00 L846.50,101.50 L848.00,100.10 L849.50,101.00 L851.00,105.00 L854.00,115.90 L857.00,126.00 L860.70,137.80 L864.00,144.50 L864.25,145.51 L864.50,144.20 L864.75,146.30 L865.00,144.86 L865.25,147.62 L865.50,145.44 L865.75,148.21 L866.00,146.72 L866.25,149.26 L866.50,147.16 L866.75,146.52 L867.00,148.01 L867.25,150.70 L867.50,148.77 L867.75,151.42 L868.00,149.54 L868.25,164.72 L868.50,149.52 L868.75,153.03 L869.00,150.35 L869.25,153.74 L869.50,150.85 L869.75,154.26 L870.00,151.15 L870.25,154.15 L870.50,151.87 L870.75,154.75 L871.00,152.20 L871.25,152.80 L871.50,152.20 L871.75,169.87 L872.00,153.35 L872.25,156.37 L872.50,153.60 L872.75,156.73 L873.00,154.05 L873.25,157.98 L873.50,154.87 L873.75,158.46 L874.00,154.82 L874.25,158.04 L874.50,155.72 L874.75,159.96 L875.00,155.28 L875.25,159.59 L875.50,156.82 L875.75,161.19 L876.00,163.51 L876.25,161.08 L876.50,156.69 L876.75,161.43 L877.00,156.26 L877.25,161.64 L877.50,156.39 L877.75,162.71 L878.00,157.39 L878.25,161.96 L878.50,158.30 L878.75,162.81 L879.00,159.02 L879.25,163.43 L879.50,157.71 L879.75,163.94 L880.00,159.35 L880.25,164.30 L880.50,159.09 L880.75,163.84 L881.00,159.16 L881.25,165.51 L881.50,165.12 L881.75,164.56 L882.00,160.90 L882.25,165.96 L882.50,161.55 L882.75,167.32 L883.00,160.97 L883.25,167.27 L883.50,159.84 L883.75,166.81 L884.00,160.25 L884.25,167.10 L884.50,162.55 L884.75,168.12 L885.00,162.05 L885.25,166.77 L885.50,161.96 L885.75,168.07 L886.00,162.10 L886.25,169.36 L886.50,160.95 L886.75,167.71 L887.00,160.96 L887.25,167.66 L887.50,163.64 L887.75,168.46 L888.00,161.45 L888.25,169.45 L888.50,161.33 L888.75,170.72 L889.00,163.51 L889.25,170.87 L889.50,163.21 L889.75,171.08 L890.00,162.50 L890.25,168.78 L890.50,163.62 L890.75,171.07 L891.00,161.80 L891.25,169.77 L891.50,164.28 L891.75,171.42 L892.00,162.93 L892.25,170.25 L892.50,163.04 L892.75,170.02 L893.00,163.63 L893.25,171.95 L893.50,162.84 L893.75,172.72 L894.00,163.83 L894.25,182.39 L894.50,164.53 L894.75,171.22 L895.00,164.76 L895.25,172.64 L895.50,163.75 L895.75,171.65 L896.00,164.15 L896.25,174.05 L896.50,165.64 L896.75,173.59 L897.00,164.45 L897.25,174.93 L897.50,166.75 L897.75,173.56 L898.00,166.70 L898.25,174.19 L898.50,166.57 L898.75,173.55 L899.00,166.27 L899.25,175.75 L899.50,166.82 L899.75,175.88 L900.00,166.16 L900.25,173.16 L900.50,163.82 L900.75,182.62 L901.00,167.35 L901.25,175.16 L901.50,163.97 L901.75,174.54 L902.00,167.16 L902.25,175.27 L902.50,173.73 L902.75,174.17 L903.00,164.71 L903.25,176.05 L903.50,166.84 L903.75,175.75 L904.00,167.87 L904.25,176.45 L904.50,164.34 L904.75,175.48 L905.00,165.74 L905.25,174.83 L905.50,167.14 L905.75,176.11 L906.00,164.78 L906.25,175.38 L906.50,167.35 L906.75,176.73 L907.00,168.95 L907.25,175.59 L907.50,169.16 L907.75,178.10 L908.00,168.20 L908.25,176.43 L908.50,166.15 L908.75,180.01 L909.00,167.98 L909.25,176.18 L909.50,165.83 L909.75,179.47 L910.00,166.48 L910.25,180.64 L910.50,169.50 L910.75,176.86 L911.00,167.58 L911.25,178.73 L911.50,166.82 L911.75,178.61 L912.00,167.32 L912.25,188.51 L912.50,170.04 L912.75,179.75 L913.00,165.75 L913.25,181.98 L913.50,167.11 L913.75,180.75 L914.00,167.66 L914.25,181.00 L914.50,168.59 L914.75,182.53 L915.00,170.68 L915.25,179.69 L915.50,170.18 L915.75,178.23 L916.00,168.96 L916.25,181.90 L916.50,168.14 L916.75,180.36 L917.00,169.58 L917.25,182.49 L917.50,170.52 L917.75,182.00 L918.00,167.33 L918.25,180.43 L918.50,168.73 L918.75,179.59 L919.00,171.08" stroke="#00e800" stroke-width="1.2" fill="none" stroke-linejoin="round"/><path d="M459.20000000000005,44 L473.20000000000005,143" stroke="#00f000" stroke-width="1" fill="none"/><path d="M704,52 L487,98.5" stroke="#fff" stroke-width="1.1"/><path d="M484.5,99.19999999999999 l6.5,-4.5 l0.2,3.8 l1.8,-0.4 M484.5,99.19999999999999 l7.8,1.5 l-1.2,-3.6" stroke="#fff" stroke-width="1" fill="none"/><rect x="705.5" y="8.5" width="137.5" height="54.5" rx="2" fill="#b4b4b4"/><rect x="704" y="7" width="137" height="54.5" rx="2.5" fill="#ffff70"/><rect x="768" y="56" width="10" height="6.5" fill="#ff0000"/></svg>
<div style="left:20px;top:278px;width:41px;height:18px;background:#00ff00;border-radius:4px"></div>
<div style="left:20px;top:523px;width:41px;height:17px;background:#00ff00;border-radius:4px"></div>
<div style="left:64px;top:532px;width:919px;height:15px;background:#f0f0f0"></div>
<div style="left:64px;top:532px;width:15px;height:15px;background:#f0f0f0;border-top:1px solid #fff;border-left:1px solid #fff;border-right:1px solid #a0a0a0;border-bottom:1px solid #a0a0a0;box-sizing:border-box"></div>
<div style="left:967px;top:532px;width:15px;height:15px;background:#f0f0f0;border-top:1px solid #fff;border-left:1px solid #fff;border-right:1px solid #a0a0a0;border-bottom:1px solid #a0a0a0;box-sizing:border-box"></div>
<div style="left:79px;top:532px;width:888px;height:15px;background:#f0f0f0;border-top:1px solid #fff;border-left:1px solid #fff;border-right:1px solid #a0a0a0;border-bottom:1px solid #a0a0a0;box-sizing:border-box"></div>
<svg style="left:68px;top:535px;" width="8" height="9" viewBox="0 0 8 9"><path d="M6,0.5 L6,8.5 L1,4.5 Z" fill="#000"/></svg>
<svg style="left:971px;top:535px;" width="8" height="9" viewBox="0 0 8 9"><path d="M1.5,0.5 L1.5,8.5 L6.5,4.5 Z" fill="#000"/></svg>
<div style="left:982px;top:287px;width:1px;height:261px;background:#404040"></div>
<div style="left:19px;top:549px;width:1003px;height:20px;background:#000"></div>
<div style="left:19px;top:569px;width:1003px;height:1.5px;background:#a0a0a0"></div>
<div style="left:1021px;top:549px;width:1.5px;height:21px;background:#a0a0a0"></div>
<div style="left:2px;top:572px;width:1022px;height:1px;background:#dadada"></div>
<div style="left:2px;top:573px;width:1022px;height:19px;background:#f0f0f0"></div>
<div style="left:1020px;top:582px;width:2px;height:2px;background:#b8b8b8"></div>
<div style="left:1017px;top:585px;width:2px;height:2px;background:#b8b8b8"></div>
<div style="left:1020px;top:585px;width:2px;height:2px;background:#b8b8b8"></div>
<div style="left:1014px;top:588px;width:2px;height:2px;background:#b8b8b8"></div>
<div style="left:1017px;top:588px;width:2px;height:2px;background:#b8b8b8"></div>
<div style="left:1020px;top:588px;width:2px;height:2px;background:#b8b8b8"></div>
<div class="t" style="left:30.30px;top:10.14px;font-size:12px;color:#000;font-weight:normal;font-family:'Liberation Sans',sans-serif;transform:scaleX(0.9812);transform-origin:left;">TiePie Multi Channel</div>
<div class="t" style="left:18.00px;top:38.84px;font-size:12px;color:#000;font-weight:normal;font-family:'Liberation Sans',sans-serif;transform:scaleX(0.9311);transform-origin:left;">Bestand</div>
<div class="t" style="left:76.00px;top:38.84px;font-size:12px;color:#000;font-weight:normal;font-family:'Liberation Sans',sans-serif;">Instrumenten</div>
<div class="t" style="left:163.50px;top:38.84px;font-size:12px;color:#000;font-weight:normal;font-family:'Liberation Sans',sans-serif;transform:scaleX(0.9123);transform-origin:left;">Beeld</div>
<div class="t" style="left:208.00px;top:38.84px;font-size:12px;color:#000;font-weight:normal;font-family:'Liberation Sans',sans-serif;transform:scaleX(0.9674);transform-origin:left;">Snelle functies</div>
<div class="t" style="left:300.50px;top:38.84px;font-size:12px;color:#000;font-weight:normal;font-family:'Liberation Sans',sans-serif;transform:scaleX(0.9395);transform-origin:left;">Gereedschappen</div>
<div class="t" style="left:404.00px;top:38.84px;font-size:12px;color:#000;font-weight:normal;font-family:'Liberation Sans',sans-serif;transform:scaleX(0.9725);transform-origin:left;">Help</div>
<div class="t" style="left:875.80px;top:41.02px;font-size:34px;color:#e31e24;font-weight:normal;font-family:'Liberation Sans',sans-serif;transform:scaleX(0.9862);transform-origin:left;">TiePie</div>
<div class="t" style="left:144.81px;top:98.64px;font-size:12px;color:#000;font-weight:normal;font-family:'Liberation Sans',sans-serif;transform:scaleX(0.8991);transform-origin:center;">262.144</div>
<div class="t" style="left:151.01px;top:113.34px;font-size:12px;color:#000;font-weight:normal;font-family:'Liberation Sans',sans-serif;">µs/div</div>
<div class="t" style="left:237.00px;top:105.84px;font-size:12px;color:#000;font-weight:normal;font-family:'Liberation Sans',sans-serif;transform:scaleX(0.9476);transform-origin:left;">100 MHz</div>
<div class="t" style="left:293.50px;top:105.84px;font-size:12px;color:#000;font-weight:normal;font-family:'Liberation Sans',sans-serif;transform:scaleX(0.8726);transform-origin:left;">262.144 kSa</div>
<div class="t" style="left:397.16px;top:98.64px;font-size:12px;color:#000;font-weight:normal;font-family:'Liberation Sans',sans-serif;transform:scaleX(0.9478);transform-origin:center;">Pre-samples:</div>
<div class="t" style="left:422.16px;top:113.34px;font-size:12px;color:#000;font-weight:normal;font-family:'Liberation Sans',sans-serif;transform:scaleX(0.9334);transform-origin:center;">0 %</div>
<div class="t" style="left:544.05px;top:98.64px;font-size:12px;color:#000;font-weight:normal;font-family:'Liberation Sans',sans-serif;transform:scaleX(0.9291);transform-origin:center;">Trigger:</div>
<div class="t" style="left:509.13px;top:113.34px;font-size:12px;color:#000;font-weight:normal;font-family:'Liberation Sans',sans-serif;transform:scaleX(0.9121);transform-origin:center;">HS5(27917).Gener...</div>
<div class="t" style="left:839.70px;top:105.84px;font-size:12px;color:#000;font-weight:normal;font-family:'Liberation Sans',sans-serif;transform:scaleX(0.9487);transform-origin:left;">Quick Setup...</div>
<div class="t" style="left:43.50px;top:140.84px;font-size:12px;color:#000;font-weight:normal;font-family:'Liberation Sans',sans-serif;transform:scaleX(0.9136);transform-origin:left;">Kan1, Kan2: HS5(27917)</div>
<div class="t" style="left:236.50px;top:141.84px;font-size:12px;color:#000;font-weight:normal;font-family:'Liberation Sans',sans-serif;transform:scaleX(0.9094);transform-origin:left;">Kan3 .. Kan6: HS6(33235)</div>
<div class="t" style="left:438.50px;top:140.34px;font-size:12px;color:#000;font-weight:normal;font-family:'Liberation Sans',sans-serif;transform:scaleX(0.9055);transform-origin:left;">Kan7 .. Kan10: HS6(35800)</div>
<div class="t" style="left:45.60px;top:171.24px;font-size:12px;color:#000;font-weight:normal;font-family:'Liberation Sans',sans-serif;transform:scaleX(0.8992);transform-origin:left;">Kan07</div>
<div class="t" style="left:127.20px;top:171.05px;font-size:14px;color:#000;font-weight:normal;font-family:'Liberation Sans',sans-serif;transform:scaleX(0.9615);transform-origin:left;">AR</div>
<div class="t" style="left:184.93px;top:164.64px;font-size:12px;color:#000;font-weight:normal;font-family:'Liberation Sans',sans-serif;transform:scaleX(0.9104);transform-origin:center;">Bereik:</div>
<div class="t" style="left:190.86px;top:179.14px;font-size:12px;color:#000;font-weight:normal;font-family:'Liberation Sans',sans-serif;transform:scaleX(0.8912);transform-origin:center;">80 V</div>
<div class="t" style="left:268.70px;top:164.94px;font-size:12px;color:#000;font-weight:normal;font-family:'Liberation Sans',sans-serif;transform:scaleX(0.9221);transform-origin:left;">Probe:</div>
<div class="t" style="left:268.00px;top:179.84px;font-size:12px;color:#000;font-weight:normal;font-family:'Liberation Sans',sans-serif;transform:scaleX(0.8364);transform-origin:left;">x1</div>
<div class="t" style="left:45.60px;top:211.24px;font-size:12px;color:#000;font-weight:normal;font-family:'Liberation Sans',sans-serif;transform:scaleX(0.8992);transform-origin:left;">Kan08</div>
<div class="t" style="left:127.20px;top:211.05px;font-size:14px;color:#000;font-weight:normal;font-family:'Liberation Sans',sans-serif;transform:scaleX(0.9615);transform-origin:left;">AR</div>
<div class="t" style="left:184.93px;top:204.64px;font-size:12px;color:#000;font-weight:normal;font-family:'Liberation Sans',sans-serif;transform:scaleX(0.9104);transform-origin:center;">Bereik:</div>
<div class="t" style="left:190.86px;top:219.14px;font-size:12px;color:#000;font-weight:normal;font-family:'Liberation Sans',sans-serif;transform:scaleX(0.8912);transform-origin:center;">80 V</div>
<div class="t" style="left:268.70px;top:204.94px;font-size:12px;color:#000;font-weight:normal;font-family:'Liberation Sans',sans-serif;transform:scaleX(0.9221);transform-origin:left;">Probe:</div>
<div class="t" style="left:268.00px;top:219.84px;font-size:12px;color:#000;font-weight:normal;font-family:'Liberation Sans',sans-serif;transform:scaleX(0.8364);transform-origin:left;">x1</div>
<div class="t" style="left:715.60px;top:171.24px;font-size:12px;color:#000;font-weight:normal;font-family:'Liberation Sans',sans-serif;transform:scaleX(0.8992);transform-origin:left;">Kan09</div>
<div class="t" style="left:797.20px;top:171.05px;font-size:14px;color:#000;font-weight:normal;font-family:'Liberation Sans',sans-serif;transform:scaleX(0.9615);transform-origin:left;">AR</div>
<div class="t" style="left:854.93px;top:164.64px;font-size:12px;color:#000;font-weight:normal;font-family:'Liberation Sans',sans-serif;transform:scaleX(0.9104);transform-origin:center;">Bereik:</div>
<div class="t" style="left:860.86px;top:179.14px;font-size:12px;color:#000;font-weight:normal;font-family:'Liberation Sans',sans-serif;transform:scaleX(0.8912);transform-origin:center;">80 V</div>
<div class="t" style="left:938.70px;top:164.94px;font-size:12px;color:#000;font-weight:normal;font-family:'Liberation Sans',sans-serif;transform:scaleX(0.9221);transform-origin:left;">Probe:</div>
<div class="t" style="left:938.00px;top:179.84px;font-size:12px;color:#000;font-weight:normal;font-family:'Liberation Sans',sans-serif;transform:scaleX(0.8364);transform-origin:left;">x1</div>
<div class="t" style="left:715.60px;top:211.24px;font-size:12px;color:#000;font-weight:normal;font-family:'Liberation Sans',sans-serif;transform:scaleX(0.8992);transform-origin:left;">Kan10</div>
<div class="t" style="left:797.20px;top:211.05px;font-size:14px;color:#000;font-weight:normal;font-family:'Liberation Sans',sans-serif;transform:scaleX(0.9615);transform-origin:left;">AR</div>
<div class="t" style="left:854.93px;top:204.64px;font-size:12px;color:#000;font-weight:normal;font-family:'Liberation Sans',sans-serif;transform:scaleX(0.9104);transform-origin:center;">Bereik:</div>
<div class="t" style="left:860.86px;top:219.14px;font-size:12px;color:#000;font-weight:normal;font-family:'Liberation Sans',sans-serif;transform:scaleX(0.8912);transform-origin:center;">80 V</div>
<div class="t" style="left:938.70px;top:204.94px;font-size:12px;color:#000;font-weight:normal;font-family:'Liberation Sans',sans-serif;transform:scaleX(0.9221);transform-origin:left;">Probe:</div>
<div class="t" style="left:938.00px;top:219.84px;font-size:12px;color:#000;font-weight:normal;font-family:'Liberation Sans',sans-serif;transform:scaleX(0.8364);transform-origin:left;">x1</div>
<div class="t" style="left:969.00px;top:261.95px;font-size:14px;color:#0a0a40;font-weight:bold;font-family:'Liberation Sans',sans-serif;transform:scaleX(0.8990);transform-origin:left;">1</div>
<div class="t" style="left:773.70px;top:300.54px;font-size:12px;color:#200000;font-weight:normal;font-family:'Liberation Sans',sans-serif;transform:scaleX(0.9830);transform-origin:left;">Resonator-filter 4 MHz</div>
<div class="t" style="left:773.70px;top:315.44px;font-size:12px;color:#200000;font-weight:normal;font-family:'Liberation Sans',sans-serif;transform:scaleX(0.9413);transform-origin:left;">Sweep 1 MHz .. 7 MHz</div>
<div class="t" style="left:773.70px;top:330.54px;font-size:12px;color:#200000;font-weight:normal;font-family:'Liberation Sans',sans-serif;transform:scaleX(0.9795);transform-origin:left;">Realtime metingen</div>
<div class="t" style="left:35.84px;top:281.44px;font-size:12px;color:#000;font-weight:normal;font-family:'Liberation Sans',sans-serif;transform:scaleX(0.9300);transform-origin:right;">0.00</div>
<div class="t" style="left:25.17px;top:312.44px;font-size:12px;color:#00ff00;font-weight:normal;font-family:'Liberation Sans',sans-serif;transform:scaleX(0.9300);transform-origin:right;">-15.00</div>
<div class="t" style="left:25.17px;top:343.04px;font-size:12px;color:#00ff00;font-weight:normal;font-family:'Liberation Sans',sans-serif;transform:scaleX(0.9300);transform-origin:right;">-30.00</div>
<div class="t" style="left:25.17px;top:373.64px;font-size:12px;color:#00ff00;font-weight:normal;font-family:'Liberation Sans',sans-serif;transform:scaleX(0.9300);transform-origin:right;">-45.00</div>
<div class="t" style="left:25.17px;top:404.24px;font-size:12px;color:#00ff00;font-weight:normal;font-family:'Liberation Sans',sans-serif;transform:scaleX(0.9300);transform-origin:right;">-60.00</div>
<div class="t" style="left:25.17px;top:434.84px;font-size:12px;color:#00ff00;font-weight:normal;font-family:'Liberation Sans',sans-serif;transform:scaleX(0.9300);transform-origin:right;">-75.00</div>
<div class="t" style="left:25.17px;top:465.44px;font-size:12px;color:#00ff00;font-weight:normal;font-family:'Liberation Sans',sans-serif;transform:scaleX(0.9300);transform-origin:right;">-90.00</div>
<div class="t" style="left:18.50px;top:496.04px;font-size:12px;color:#00ff00;font-weight:normal;font-family:'Liberation Sans',sans-serif;transform:scaleX(0.9300);transform-origin:right;">-105.00</div>
<div class="t" style="left:18.80px;top:526.64px;font-size:12px;color:#000;font-weight:normal;font-family:'Liberation Sans',sans-serif;transform:scaleX(0.9300);transform-origin:right;">-120.00</div>
<div class="t" style="left:42.89px;top:553.64px;font-size:12px;color:#fff;font-weight:normal;font-family:'Liberation Sans',sans-serif;transform:scaleX(0.9200);transform-origin:center;">500 kHz</div>
<div class="t" style="left:127.85px;top:553.64px;font-size:12px;color:#fff;font-weight:normal;font-family:'Liberation Sans',sans-serif;transform:scaleX(0.9392);transform-origin:center;">1.200 MHz</div>
<div class="t" style="left:219.81px;top:553.64px;font-size:12px;color:#fff;font-weight:normal;font-family:'Liberation Sans',sans-serif;transform:scaleX(0.9392);transform-origin:center;">1.900 MHz</div>
<div class="t" style="left:311.77px;top:553.64px;font-size:12px;color:#fff;font-weight:normal;font-family:'Liberation Sans',sans-serif;transform:scaleX(0.9392);transform-origin:center;">2.600 MHz</div>
<div class="t" style="left:403.73px;top:553.64px;font-size:12px;color:#fff;font-weight:normal;font-family:'Liberation Sans',sans-serif;transform:scaleX(0.9392);transform-origin:center;">3.300 MHz</div>
<div class="t" style="left:495.69px;top:553.64px;font-size:12px;color:#fff;font-weight:normal;font-family:'Liberation Sans',sans-serif;transform:scaleX(0.9392);transform-origin:center;">4.000 MHz</div>
<div class="t" style="left:587.65px;top:553.64px;font-size:12px;color:#fff;font-weight:normal;font-family:'Liberation Sans',sans-serif;transform:scaleX(0.9392);transform-origin:center;">4.700 MHz</div>
<div class="t" style="left:679.61px;top:553.64px;font-size:12px;color:#fff;font-weight:normal;font-family:'Liberation Sans',sans-serif;transform:scaleX(0.9392);transform-origin:center;">5.400 MHz</div>
<div class="t" style="left:771.57px;top:553.64px;font-size:12px;color:#fff;font-weight:normal;font-family:'Liberation Sans',sans-serif;transform:scaleX(0.9392);transform-origin:center;">6.100 MHz</div>
<div class="t" style="left:863.53px;top:553.64px;font-size:12px;color:#fff;font-weight:normal;font-family:'Liberation Sans',sans-serif;transform:scaleX(0.9392);transform-origin:center;">6.800 MHz</div>
<div class="t" style="left:955.49px;top:553.64px;font-size:12px;color:#fff;font-weight:normal;font-family:'Liberation Sans',sans-serif;transform:scaleX(0.9392);transform-origin:center;">7.500 MHz</div>
</body></html>
